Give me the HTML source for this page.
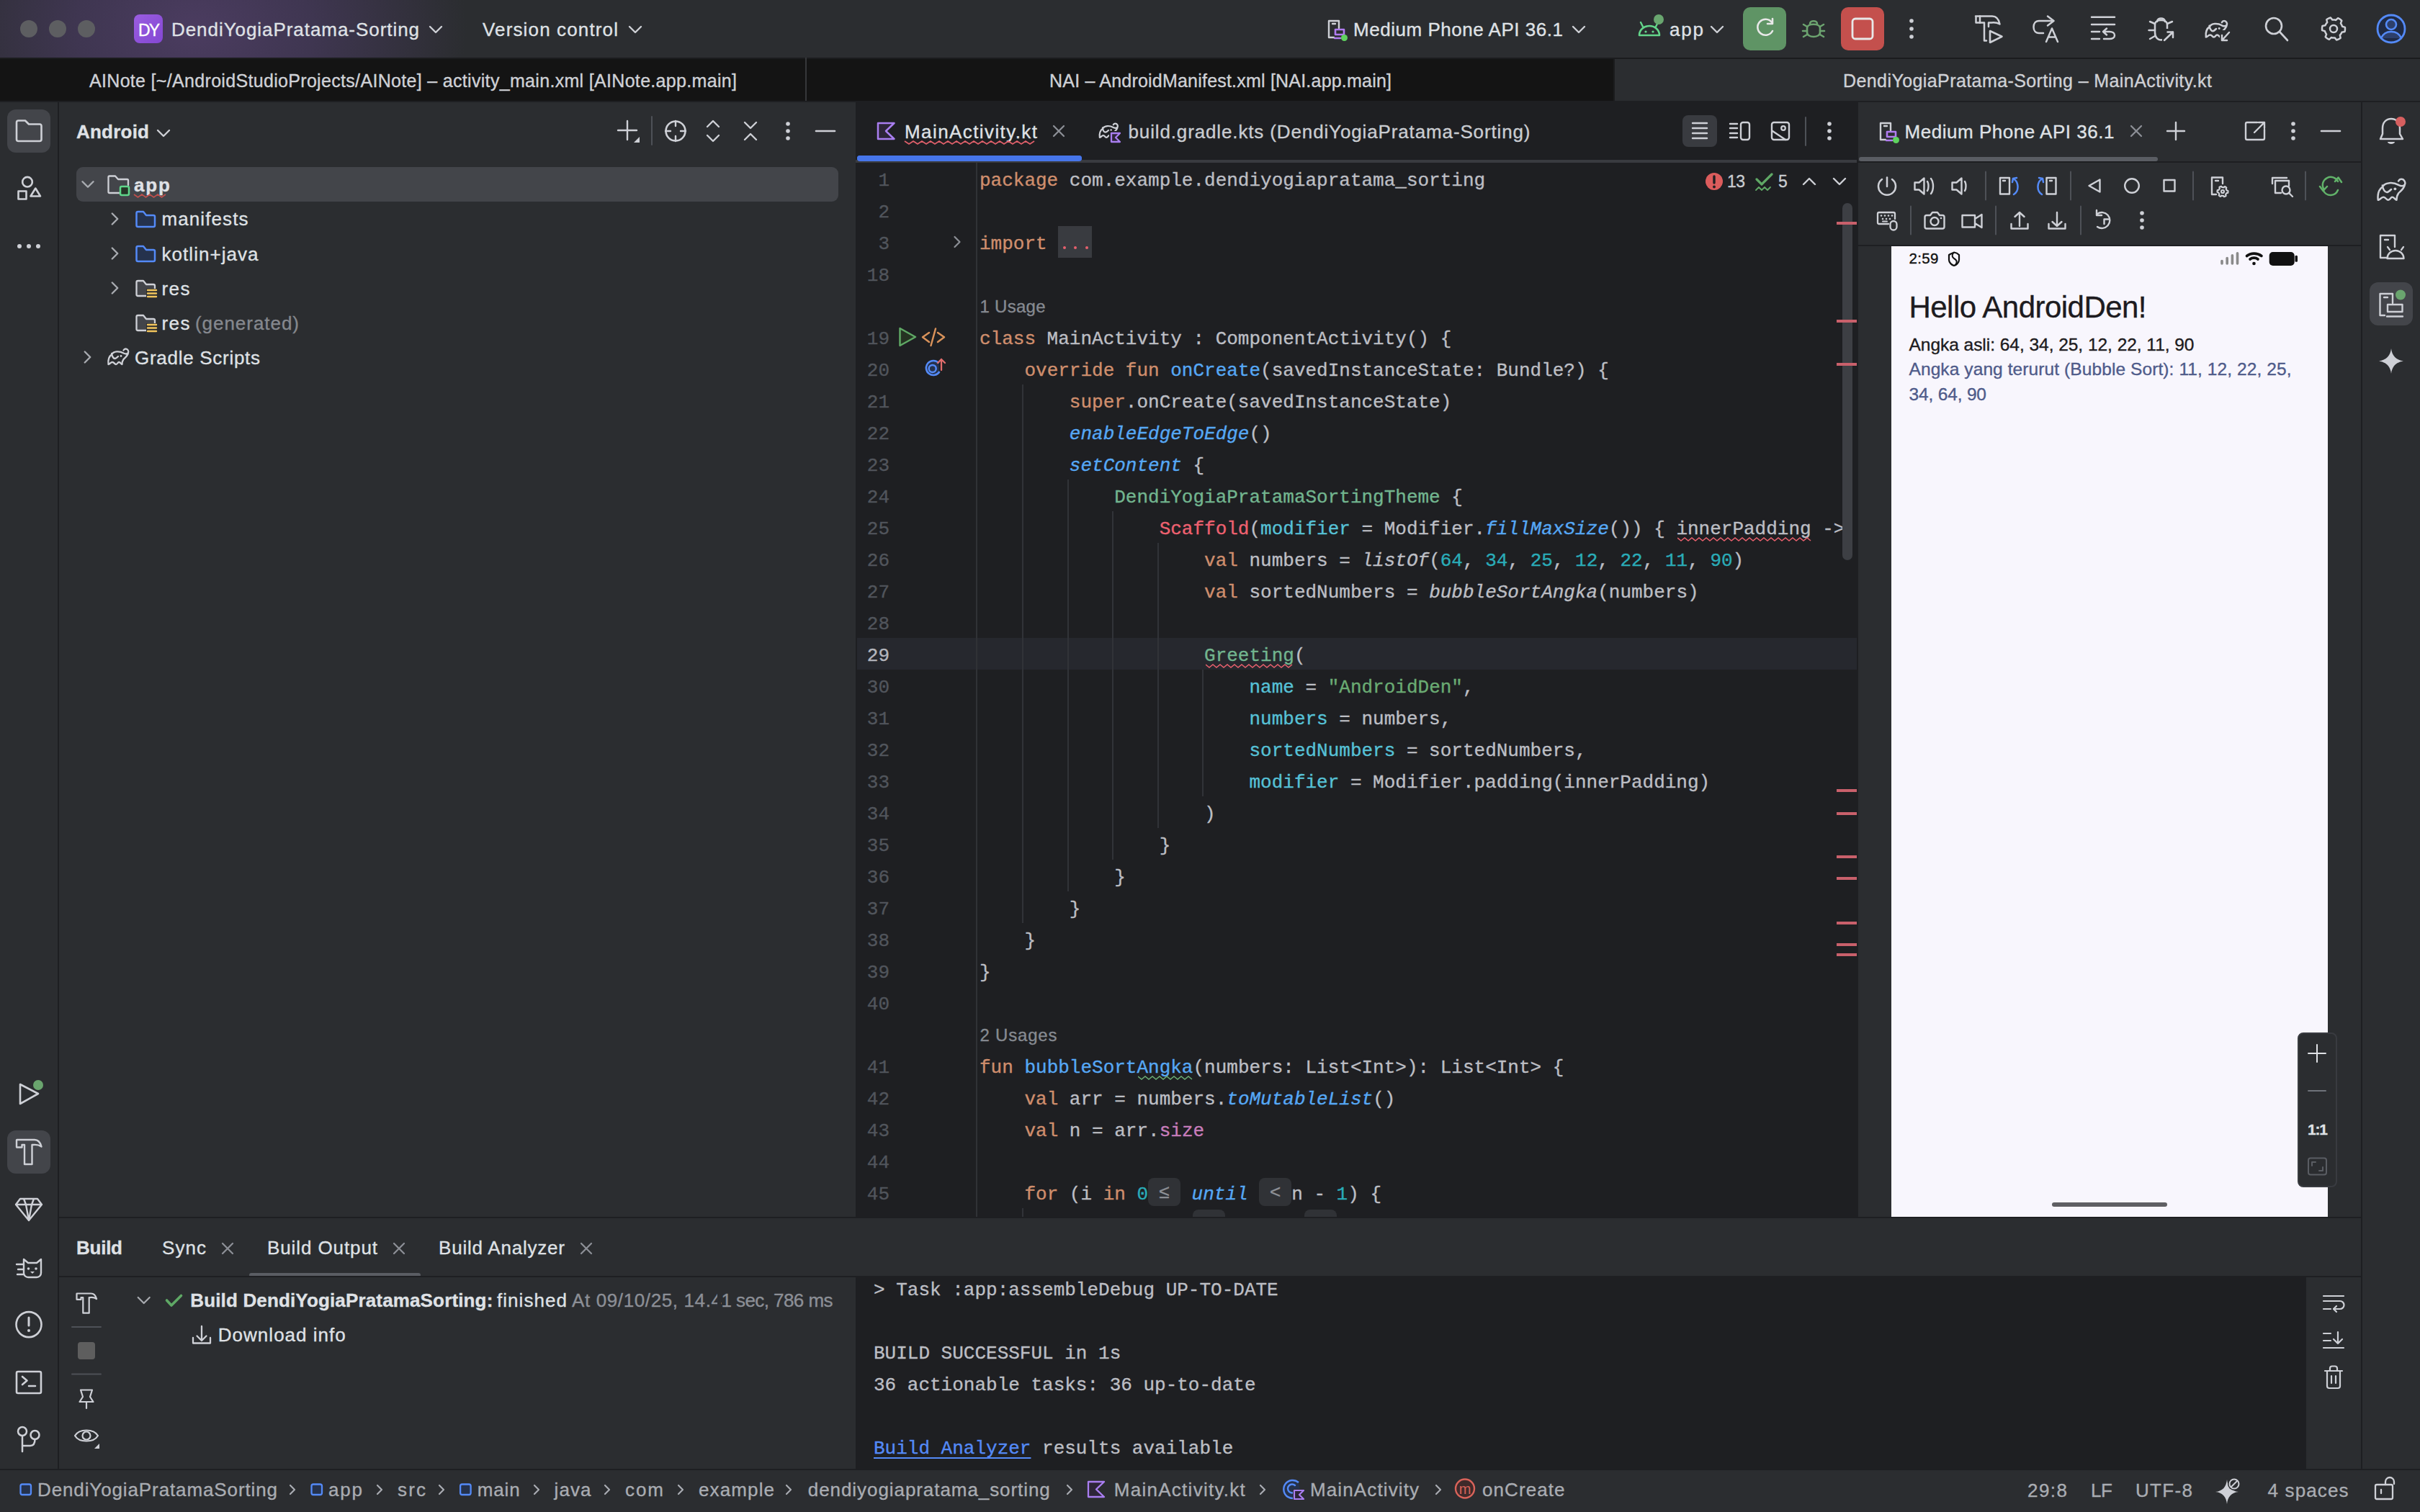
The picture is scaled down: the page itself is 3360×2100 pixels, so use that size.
<!DOCTYPE html><html><head><meta charset='utf-8'><style>
html,body{margin:0;padding:0;width:3360px;height:2100px;overflow:hidden;background:#2b2d30}
div{-webkit-text-stroke:0.35px currentColor}
</style></head><body><div style='position:absolute;left:0;top:0;width:3360px;height:80px;background:radial-gradient(ellipse 430px 300px at 270px 40px,#4b3c60 0%,#3f3651 38%,#2b2d30 88%)'></div>
<div style='position:absolute;left:28px;top:28px;width:24px;height:24px;background:#5d5e61;border-radius:12px;'></div>
<div style='position:absolute;left:68px;top:28px;width:24px;height:24px;background:#5d5e61;border-radius:12px;'></div>
<div style='position:absolute;left:108px;top:28px;width:24px;height:24px;background:#5d5e61;border-radius:12px;'></div>
<div style='position:absolute;left:186px;top:20px;width:40px;height:40px;background:linear-gradient(135deg,#9a5de0,#8447d3);border-radius:8px;'></div>
<div style="position:absolute;left:192.0px;top:42.0px;line-height:0;white-space:pre;font-family:'Liberation Sans', sans-serif;font-size:23px;font-weight:400;font-style:normal;color:#ffffff;letter-spacing:-1.953px;">DY</div>
<div style="position:absolute;left:238.0px;top:41.0px;line-height:0;white-space:pre;font-family:'Liberation Sans', sans-serif;font-size:26px;font-weight:400;font-style:normal;color:#dfe1e5;letter-spacing:0.944px;">DendiYogiaPratama-Sorting</div>
<div style="position:absolute;left:670.0px;top:41.0px;line-height:0;white-space:pre;font-family:'Liberation Sans', sans-serif;font-size:26px;font-weight:400;font-style:normal;color:#dfe1e5;letter-spacing:1.144px;">Version control</div>
<div style="position:absolute;left:1879.0px;top:41.0px;line-height:0;white-space:pre;font-family:'Liberation Sans', sans-serif;font-size:26px;font-weight:400;font-style:normal;color:#dfe1e5;letter-spacing:0.530px;">Medium Phone API 36.1</div>
<div style="position:absolute;left:2318.0px;top:41.0px;line-height:0;white-space:pre;font-family:'Liberation Sans', sans-serif;font-size:26px;font-weight:400;font-style:normal;color:#dfe1e5;letter-spacing:1.805px;">app</div>
<div style='position:absolute;left:2420px;top:10px;width:60px;height:60px;background:#5f9465;border-radius:10px;'></div>
<div style='position:absolute;left:2556px;top:10px;width:60px;height:60px;background:#c4504d;border-radius:10px;'></div>
<div style='position:absolute;left:0px;top:80px;width:3360px;height:60px;background:#141414;border-radius:0px;'></div>
<div style='position:absolute;left:0px;top:80px;width:3360px;height:2px;background:#1b1c1e;border-radius:0px;'></div>
<div style='position:absolute;left:1118px;top:80px;width:2px;height:60px;background:#36373a;border-radius:0px;'></div>
<div style='position:absolute;left:2240px;top:82px;width:1120px;height:58px;background:#2b2d30;border-radius:0px;'></div>
<div style='position:absolute;left:2240px;top:82px;width:2px;height:58px;background:#1b1c1e;border-radius:0px;'></div>
<div style="position:absolute;left:124.0px;top:112.3px;line-height:0;white-space:pre;font-family:'Liberation Sans', sans-serif;font-size:25px;font-weight:400;font-style:normal;color:#cfd1d6;letter-spacing:0.319px;">AINote [~/AndroidStudioProjects/AINote] – activity_main.xml [AINote.app.main]</div>
<div style="position:absolute;left:1457.0px;top:112.3px;line-height:0;white-space:pre;font-family:'Liberation Sans', sans-serif;font-size:25px;font-weight:400;font-style:normal;color:#cfd1d6;letter-spacing:0.208px;">NAI – AndroidManifest.xml [NAI.app.main]</div>
<div style="position:absolute;left:2559.0px;top:112.3px;line-height:0;white-space:pre;font-family:'Liberation Sans', sans-serif;font-size:25px;font-weight:400;font-style:normal;color:#cfd1d6;letter-spacing:0.412px;">DendiYogiaPratama-Sorting – MainActivity.kt</div>
<div style='position:absolute;left:0px;top:140px;width:3360px;height:2px;background:#1e1f22;border-radius:0px;'></div>
<div style='position:absolute;left:0px;top:142px;width:80px;height:1898px;background:#2b2d30;border-radius:0px;'></div>
<div style='position:absolute;left:80px;top:142px;width:2px;height:1898px;background:#1e1f22;border-radius:0px;'></div>
<div style='position:absolute;left:10px;top:152px;width:60px;height:60px;background:#43454a;border-radius:12px;'></div>
<div style='position:absolute;left:10px;top:1570px;width:60px;height:60px;background:#43454a;border-radius:12px;'></div>
<div style='position:absolute;left:82px;top:142px;width:1106px;height:1548px;background:#2b2d30;border-radius:0px;'></div>
<div style="position:absolute;left:106.0px;top:183.0px;line-height:0;white-space:pre;font-family:'Liberation Sans', sans-serif;font-size:26px;font-weight:700;font-style:normal;color:#dfe1e5;letter-spacing:0.224px;">Android</div>
<div style='position:absolute;left:106px;top:232px;width:1058px;height:48px;background:#43454a;border-radius:9px;'></div>
<div style="position:absolute;left:186.0px;top:256.6px;line-height:0;white-space:pre;font-family:'Liberation Sans', sans-serif;font-size:26px;font-weight:700;font-style:normal;color:#dfe1e5;letter-spacing:1.883px;">app</div>
<div style="position:absolute;left:224.5px;top:304.4px;line-height:0;white-space:pre;font-family:'Liberation Sans', sans-serif;font-size:26px;font-weight:400;font-style:normal;color:#dfe1e5;letter-spacing:1.092px;">manifests</div>
<div style="position:absolute;left:224.5px;top:352.9px;line-height:0;white-space:pre;font-family:'Liberation Sans', sans-serif;font-size:26px;font-weight:400;font-style:normal;color:#dfe1e5;letter-spacing:1.042px;">kotlin+java</div>
<div style="position:absolute;left:224.5px;top:401.0px;line-height:0;white-space:pre;font-family:'Liberation Sans', sans-serif;font-size:26px;font-weight:400;font-style:normal;color:#dfe1e5;letter-spacing:1.438px;">res</div>
<div style="position:absolute;left:224.5px;top:448.8px;line-height:0;white-space:pre;font-family:'Liberation Sans', sans-serif;font-size:26px;font-weight:400;font-style:normal;color:#dfe1e5;letter-spacing:1.438px;">res</div>
<div style="position:absolute;left:271.0px;top:448.8px;line-height:0;white-space:pre;font-family:'Liberation Sans', sans-serif;font-size:26px;font-weight:400;font-style:normal;color:#85888e;letter-spacing:0.958px;">(generated)</div>
<div style="position:absolute;left:187.0px;top:496.6px;line-height:0;white-space:pre;font-family:'Liberation Sans', sans-serif;font-size:26px;font-weight:400;font-style:normal;color:#dfe1e5;letter-spacing:0.713px;">Gradle Scripts</div>
<div style='position:absolute;left:1188px;top:142px;width:1392px;height:1548px;background:#1e1f22;border-radius:0px;'></div>
<div style='position:absolute;left:1190px;top:216px;width:312px;height:8px;background:#3b72e8;border-radius:4px;'></div>
<div style='position:absolute;left:1188px;top:222px;width:1390px;height:4px;background:#393b40;border-radius:0px;'></div>
<div style='position:absolute;left:1190px;top:216px;width:312px;height:8px;background:#4675ea;border-radius:4px;'></div>
<div style="position:absolute;left:1256.0px;top:183.0px;line-height:0;white-space:pre;font-family:'Liberation Sans', sans-serif;font-size:26px;font-weight:400;font-style:normal;color:#dfe1e5;letter-spacing:1.413px;">MainActivity.kt</div>
<div style="position:absolute;left:1566.5px;top:183.0px;line-height:0;white-space:pre;font-family:'Liberation Sans', sans-serif;font-size:26px;font-weight:400;font-style:normal;color:#c9ccd1;letter-spacing:0.866px;">build.gradle.kts (DendiYogiaPratama-Sorting)</div>
<div style='position:absolute;left:2336px;top:160px;width:48px;height:44px;background:#393b40;border-radius:8px;'></div>
<div style='position:absolute;left:1190px;top:886px;width:1388px;height:44px;background:#26282e;border-radius:0px;'></div>
<div style='position:absolute;left:1354.5px;top:226px;width:2px;height:1464px;background:#303236;border-radius:0px;'></div>
<div style='position:absolute;left:1419.4px;top:534px;width:2px;height:748px;background:#313338;border-radius:0px;'></div>
<div style='position:absolute;left:1481.8px;top:666px;width:2px;height:572px;background:#313338;border-radius:0px;'></div>
<div style='position:absolute;left:1544.2px;top:710px;width:2px;height:484px;background:#313338;border-radius:0px;'></div>
<div style='position:absolute;left:1606.6px;top:754px;width:2px;height:396px;background:#313338;border-radius:0px;'></div>
<div style='position:absolute;left:1669.0px;top:930px;width:2px;height:176px;background:#313338;border-radius:0px;'></div>
<div style='position:absolute;left:1419.4px;top:1678px;width:2px;height:44px;background:#313338;border-radius:0px;'></div>
<div style='position:absolute;left:1469.2px;top:314px;width:47px;height:44px;background:#393b40;border-radius:0px;'></div>
<div style='position:absolute;left:1475.7px;top:342px;width:4px;height:4px;background:#e5606d;border-radius:2px;'></div>
<div style='position:absolute;left:1491.3px;top:342px;width:4px;height:4px;background:#e5606d;border-radius:2px;'></div>
<div style='position:absolute;left:1506.9px;top:342px;width:4px;height:4px;background:#e5606d;border-radius:2px;'></div>
<div style='position:absolute;left:1594.0px;top:1636px;width:45px;height:39px;background:#303236;border-radius:8px;'></div>
<div style="position:absolute;left:1594.0px;width:45px;text-align:center;top:1636px;height:39px;line-height:39px;font-family:'Liberation Sans',sans-serif;font-size:26px;color:#8e9197">≤</div>
<div style='position:absolute;left:1748.2px;top:1636px;width:45px;height:39px;background:#303236;border-radius:8px;'></div>
<div style="position:absolute;left:1748.2px;width:45px;text-align:center;top:1636px;height:39px;line-height:39px;font-family:'Liberation Sans',sans-serif;font-size:26px;color:#8e9197">&lt;</div>
<div style="position:absolute;left:1360px;top:1637.2px;height:44px;line-height:44px;white-space:pre;font-family:'Liberation Mono',monospace;font-size:26px;color:#bcbec4"><span style='color:#bcbec4'>    </span><span style='color:#cf8e6d'>for</span><span style='color:#bcbec4'> (i </span><span style='color:#cf8e6d'>in</span><span style='color:#bcbec4'> </span><span style='color:#2aacb8'>0</span></div>
<div style="position:absolute;left:1639.0px;top:1637.2px;height:44px;line-height:44px;white-space:pre;font-family:'Liberation Mono',monospace;font-size:26px;color:#bcbec4"><span style='color:#bcbec4'> </span><span style='color:#56a8f5;font-style:italic'>until</span><span style='color:#bcbec4'> </span></div>
<div style="position:absolute;left:1793.2px;top:1637.2px;height:44px;line-height:44px;white-space:pre;font-family:'Liberation Mono',monospace;font-size:26px;color:#bcbec4"><span style='color:#bcbec4'>n - </span><span style='color:#2aacb8'>1</span><span style='color:#bcbec4'>) {</span></div>
<div style='position:absolute;left:1656.4px;top:1680px;width:45px;height:39px;background:#303236;border-radius:8px;'></div>
<div style="position:absolute;left:1656.4px;width:45px;text-align:center;top:1680px;height:39px;line-height:39px;font-family:'Liberation Sans',sans-serif;font-size:26px;color:#8e9197">≤</div>
<div style='position:absolute;left:1810.6000000000001px;top:1680px;width:45px;height:39px;background:#303236;border-radius:8px;'></div>
<div style="position:absolute;left:1810.6000000000001px;width:45px;text-align:center;top:1680px;height:39px;line-height:39px;font-family:'Liberation Sans',sans-serif;font-size:26px;color:#8e9197">&lt;</div>
<div style="position:absolute;left:1360px;top:1681.2px;height:44px;line-height:44px;white-space:pre;font-family:'Liberation Mono',monospace;font-size:26px;color:#bcbec4"><span style='color:#bcbec4'>        </span><span style='color:#cf8e6d'>for</span><span style='color:#bcbec4'> (j </span><span style='color:#cf8e6d'>in</span><span style='color:#bcbec4'> </span><span style='color:#2aacb8'>0</span></div>
<div style="position:absolute;left:1701.4px;top:1681.2px;height:44px;line-height:44px;white-space:pre;font-family:'Liberation Mono',monospace;font-size:26px;color:#bcbec4"><span style='color:#bcbec4'> </span><span style='color:#56a8f5;font-style:italic'>until</span><span style='color:#bcbec4'> </span></div>
<div style="position:absolute;left:1855.6000000000001px;top:1681.2px;height:44px;line-height:44px;white-space:pre;font-family:'Liberation Mono',monospace;font-size:26px;color:#bcbec4"><span style='color:#bcbec4'>n - i - </span><span style='color:#2aacb8'>1</span><span style='color:#bcbec4'>) {</span></div>
<div style="position:absolute;left:1360px;top:229.2px;height:44px;line-height:44px;white-space:pre;font-family:'Liberation Mono',monospace;font-size:26px;color:#bcbec4"><span style='color:#cf8e6d'>package</span><span style='color:#bcbec4'> com.example.dendiyogiapratama_sorting</span></div>
<div style="position:absolute;left:1360px;top:317.2px;height:44px;line-height:44px;white-space:pre;font-family:'Liberation Mono',monospace;font-size:26px;color:#bcbec4"><span style='color:#cf8e6d'>import</span></div>
<div style="position:absolute;left:1360px;top:449.2px;height:44px;line-height:44px;white-space:pre;font-family:'Liberation Mono',monospace;font-size:26px;color:#bcbec4"><span style='color:#cf8e6d'>class</span><span style='color:#bcbec4'> MainActivity : ComponentActivity() {</span></div>
<div style="position:absolute;left:1360px;top:493.2px;height:44px;line-height:44px;white-space:pre;font-family:'Liberation Mono',monospace;font-size:26px;color:#bcbec4"><span style='color:#bcbec4'>    </span><span style='color:#cf8e6d'>override fun </span><span style='color:#56a8f5'>onCreate</span><span style='color:#bcbec4'>(savedInstanceState: Bundle?) {</span></div>
<div style="position:absolute;left:1360px;top:537.2px;height:44px;line-height:44px;white-space:pre;font-family:'Liberation Mono',monospace;font-size:26px;color:#bcbec4"><span style='color:#bcbec4'>        </span><span style='color:#cf8e6d'>super</span><span style='color:#bcbec4'>.onCreate(savedInstanceState)</span></div>
<div style="position:absolute;left:1360px;top:581.2px;height:44px;line-height:44px;white-space:pre;font-family:'Liberation Mono',monospace;font-size:26px;color:#bcbec4"><span style='color:#bcbec4'>        </span><span style='color:#56a8f5;font-style:italic'>enableEdgeToEdge</span><span style='color:#bcbec4'>()</span></div>
<div style="position:absolute;left:1360px;top:625.2px;height:44px;line-height:44px;white-space:pre;font-family:'Liberation Mono',monospace;font-size:26px;color:#bcbec4"><span style='color:#bcbec4'>        </span><span style='color:#56a8f5;font-style:italic'>setContent</span><span style='color:#bcbec4'> {</span></div>
<div style="position:absolute;left:1360px;top:669.2px;height:44px;line-height:44px;white-space:pre;font-family:'Liberation Mono',monospace;font-size:26px;color:#bcbec4"><span style='color:#bcbec4'>            </span><span style='color:#72b58f'>DendiYogiaPratamaSortingTheme</span><span style='color:#bcbec4'> {</span></div>
<div style="position:absolute;left:1360px;top:713.2px;height:44px;line-height:44px;white-space:pre;font-family:'Liberation Mono',monospace;font-size:26px;color:#bcbec4"><span style='color:#bcbec4'>                </span><span style='color:#ee6170'>Scaffold</span><span style='color:#bcbec4'>(</span><span style='color:#56c1d6'>modifier</span><span style='color:#bcbec4'> = Modifier.</span><span style='color:#56a8f5;font-style:italic'>fillMaxSize</span><span style='color:#bcbec4'>()) { innerPadding -&gt;</span></div>
<div style="position:absolute;left:1360px;top:757.2px;height:44px;line-height:44px;white-space:pre;font-family:'Liberation Mono',monospace;font-size:26px;color:#bcbec4"><span style='color:#bcbec4'>                    </span><span style='color:#cf8e6d'>val</span><span style='color:#bcbec4'> numbers = </span><span style='color:#bcbec4;font-style:italic'>listOf</span><span style='color:#bcbec4'>(</span><span style='color:#2aacb8'>64</span><span style='color:#bcbec4'>, </span><span style='color:#2aacb8'>34</span><span style='color:#bcbec4'>, </span><span style='color:#2aacb8'>25</span><span style='color:#bcbec4'>, </span><span style='color:#2aacb8'>12</span><span style='color:#bcbec4'>, </span><span style='color:#2aacb8'>22</span><span style='color:#bcbec4'>, </span><span style='color:#2aacb8'>11</span><span style='color:#bcbec4'>, </span><span style='color:#2aacb8'>90</span><span style='color:#bcbec4'>)</span></div>
<div style="position:absolute;left:1360px;top:801.2px;height:44px;line-height:44px;white-space:pre;font-family:'Liberation Mono',monospace;font-size:26px;color:#bcbec4"><span style='color:#bcbec4'>                    </span><span style='color:#cf8e6d'>val</span><span style='color:#bcbec4'> sortedNumbers = </span><span style='color:#bcbec4;font-style:italic'>bubbleSortAngka</span><span style='color:#bcbec4'>(numbers)</span></div>
<div style="position:absolute;left:1360px;top:889.2px;height:44px;line-height:44px;white-space:pre;font-family:'Liberation Mono',monospace;font-size:26px;color:#bcbec4"><span style='color:#bcbec4'>                    </span><span style='color:#72b58f'>Greeting</span><span style='color:#bcbec4'>(</span></div>
<div style="position:absolute;left:1360px;top:933.2px;height:44px;line-height:44px;white-space:pre;font-family:'Liberation Mono',monospace;font-size:26px;color:#bcbec4"><span style='color:#bcbec4'>                        </span><span style='color:#56c1d6'>name</span><span style='color:#bcbec4'> = </span><span style='color:#6aab73'>&quot;AndroidDen&quot;</span><span style='color:#bcbec4'>,</span></div>
<div style="position:absolute;left:1360px;top:977.2px;height:44px;line-height:44px;white-space:pre;font-family:'Liberation Mono',monospace;font-size:26px;color:#bcbec4"><span style='color:#bcbec4'>                        </span><span style='color:#56c1d6'>numbers</span><span style='color:#bcbec4'> = numbers,</span></div>
<div style="position:absolute;left:1360px;top:1021.2px;height:44px;line-height:44px;white-space:pre;font-family:'Liberation Mono',monospace;font-size:26px;color:#bcbec4"><span style='color:#bcbec4'>                        </span><span style='color:#56c1d6'>sortedNumbers</span><span style='color:#bcbec4'> = sortedNumbers,</span></div>
<div style="position:absolute;left:1360px;top:1065.2px;height:44px;line-height:44px;white-space:pre;font-family:'Liberation Mono',monospace;font-size:26px;color:#bcbec4"><span style='color:#bcbec4'>                        </span><span style='color:#56c1d6'>modifier</span><span style='color:#bcbec4'> = Modifier.padding(innerPadding)</span></div>
<div style="position:absolute;left:1360px;top:1109.2px;height:44px;line-height:44px;white-space:pre;font-family:'Liberation Mono',monospace;font-size:26px;color:#bcbec4"><span style='color:#bcbec4'>                    )</span></div>
<div style="position:absolute;left:1360px;top:1153.2px;height:44px;line-height:44px;white-space:pre;font-family:'Liberation Mono',monospace;font-size:26px;color:#bcbec4"><span style='color:#bcbec4'>                }</span></div>
<div style="position:absolute;left:1360px;top:1197.2px;height:44px;line-height:44px;white-space:pre;font-family:'Liberation Mono',monospace;font-size:26px;color:#bcbec4"><span style='color:#bcbec4'>            }</span></div>
<div style="position:absolute;left:1360px;top:1241.2px;height:44px;line-height:44px;white-space:pre;font-family:'Liberation Mono',monospace;font-size:26px;color:#bcbec4"><span style='color:#bcbec4'>        }</span></div>
<div style="position:absolute;left:1360px;top:1285.2px;height:44px;line-height:44px;white-space:pre;font-family:'Liberation Mono',monospace;font-size:26px;color:#bcbec4"><span style='color:#bcbec4'>    }</span></div>
<div style="position:absolute;left:1360px;top:1329.2px;height:44px;line-height:44px;white-space:pre;font-family:'Liberation Mono',monospace;font-size:26px;color:#bcbec4"><span style='color:#bcbec4'>}</span></div>
<div style="position:absolute;left:1360px;top:1461.2px;height:44px;line-height:44px;white-space:pre;font-family:'Liberation Mono',monospace;font-size:26px;color:#bcbec4"><span style='color:#cf8e6d'>fun </span><span style='color:#56a8f5'>bubbleSortAngka</span><span style='color:#bcbec4'>(numbers: List&lt;Int&gt;): List&lt;Int&gt; {</span></div>
<div style="position:absolute;left:1360px;top:1505.2px;height:44px;line-height:44px;white-space:pre;font-family:'Liberation Mono',monospace;font-size:26px;color:#bcbec4"><span style='color:#bcbec4'>    </span><span style='color:#cf8e6d'>val</span><span style='color:#bcbec4'> arr = numbers.</span><span style='color:#56a8f5;font-style:italic'>toMutableList</span><span style='color:#bcbec4'>()</span></div>
<div style="position:absolute;left:1360px;top:1549.2px;height:44px;line-height:44px;white-space:pre;font-family:'Liberation Mono',monospace;font-size:26px;color:#bcbec4"><span style='color:#bcbec4'>    </span><span style='color:#cf8e6d'>val</span><span style='color:#bcbec4'> n = arr.</span><span style='color:#c77dbb'>size</span></div>
<div style="position:absolute;left:1360.5px;top:426.3px;line-height:0;white-space:pre;font-family:'Liberation Sans', sans-serif;font-size:24px;font-weight:400;font-style:normal;color:#868a91;letter-spacing:0.268px;">1 Usage</div>
<div style="position:absolute;left:1360.5px;top:1438.3px;line-height:0;white-space:pre;font-family:'Liberation Sans', sans-serif;font-size:24px;font-weight:400;font-style:normal;color:#868a91;letter-spacing:0.801px;">2 Usages</div>
<div style="position:absolute;left:1140px;width:95px;text-align:right;top:229.2px;height:44px;line-height:44px;white-space:pre;font-family:'Liberation Mono',monospace;font-size:26px;color:#51555c">1</div>
<div style="position:absolute;left:1140px;width:95px;text-align:right;top:273.2px;height:44px;line-height:44px;white-space:pre;font-family:'Liberation Mono',monospace;font-size:26px;color:#51555c">2</div>
<div style="position:absolute;left:1140px;width:95px;text-align:right;top:317.2px;height:44px;line-height:44px;white-space:pre;font-family:'Liberation Mono',monospace;font-size:26px;color:#51555c">3</div>
<div style="position:absolute;left:1140px;width:95px;text-align:right;top:361.2px;height:44px;line-height:44px;white-space:pre;font-family:'Liberation Mono',monospace;font-size:26px;color:#51555c">18</div>
<div style="position:absolute;left:1140px;width:95px;text-align:right;top:449.2px;height:44px;line-height:44px;white-space:pre;font-family:'Liberation Mono',monospace;font-size:26px;color:#51555c">19</div>
<div style="position:absolute;left:1140px;width:95px;text-align:right;top:493.2px;height:44px;line-height:44px;white-space:pre;font-family:'Liberation Mono',monospace;font-size:26px;color:#51555c">20</div>
<div style="position:absolute;left:1140px;width:95px;text-align:right;top:537.2px;height:44px;line-height:44px;white-space:pre;font-family:'Liberation Mono',monospace;font-size:26px;color:#51555c">21</div>
<div style="position:absolute;left:1140px;width:95px;text-align:right;top:581.2px;height:44px;line-height:44px;white-space:pre;font-family:'Liberation Mono',monospace;font-size:26px;color:#51555c">22</div>
<div style="position:absolute;left:1140px;width:95px;text-align:right;top:625.2px;height:44px;line-height:44px;white-space:pre;font-family:'Liberation Mono',monospace;font-size:26px;color:#51555c">23</div>
<div style="position:absolute;left:1140px;width:95px;text-align:right;top:669.2px;height:44px;line-height:44px;white-space:pre;font-family:'Liberation Mono',monospace;font-size:26px;color:#51555c">24</div>
<div style="position:absolute;left:1140px;width:95px;text-align:right;top:713.2px;height:44px;line-height:44px;white-space:pre;font-family:'Liberation Mono',monospace;font-size:26px;color:#51555c">25</div>
<div style="position:absolute;left:1140px;width:95px;text-align:right;top:757.2px;height:44px;line-height:44px;white-space:pre;font-family:'Liberation Mono',monospace;font-size:26px;color:#51555c">26</div>
<div style="position:absolute;left:1140px;width:95px;text-align:right;top:801.2px;height:44px;line-height:44px;white-space:pre;font-family:'Liberation Mono',monospace;font-size:26px;color:#51555c">27</div>
<div style="position:absolute;left:1140px;width:95px;text-align:right;top:845.2px;height:44px;line-height:44px;white-space:pre;font-family:'Liberation Mono',monospace;font-size:26px;color:#51555c">28</div>
<div style="position:absolute;left:1140px;width:95px;text-align:right;top:889.2px;height:44px;line-height:44px;white-space:pre;font-family:'Liberation Mono',monospace;font-size:26px;color:#b4b6bd">29</div>
<div style="position:absolute;left:1140px;width:95px;text-align:right;top:933.2px;height:44px;line-height:44px;white-space:pre;font-family:'Liberation Mono',monospace;font-size:26px;color:#51555c">30</div>
<div style="position:absolute;left:1140px;width:95px;text-align:right;top:977.2px;height:44px;line-height:44px;white-space:pre;font-family:'Liberation Mono',monospace;font-size:26px;color:#51555c">31</div>
<div style="position:absolute;left:1140px;width:95px;text-align:right;top:1021.2px;height:44px;line-height:44px;white-space:pre;font-family:'Liberation Mono',monospace;font-size:26px;color:#51555c">32</div>
<div style="position:absolute;left:1140px;width:95px;text-align:right;top:1065.2px;height:44px;line-height:44px;white-space:pre;font-family:'Liberation Mono',monospace;font-size:26px;color:#51555c">33</div>
<div style="position:absolute;left:1140px;width:95px;text-align:right;top:1109.2px;height:44px;line-height:44px;white-space:pre;font-family:'Liberation Mono',monospace;font-size:26px;color:#51555c">34</div>
<div style="position:absolute;left:1140px;width:95px;text-align:right;top:1153.2px;height:44px;line-height:44px;white-space:pre;font-family:'Liberation Mono',monospace;font-size:26px;color:#51555c">35</div>
<div style="position:absolute;left:1140px;width:95px;text-align:right;top:1197.2px;height:44px;line-height:44px;white-space:pre;font-family:'Liberation Mono',monospace;font-size:26px;color:#51555c">36</div>
<div style="position:absolute;left:1140px;width:95px;text-align:right;top:1241.2px;height:44px;line-height:44px;white-space:pre;font-family:'Liberation Mono',monospace;font-size:26px;color:#51555c">37</div>
<div style="position:absolute;left:1140px;width:95px;text-align:right;top:1285.2px;height:44px;line-height:44px;white-space:pre;font-family:'Liberation Mono',monospace;font-size:26px;color:#51555c">38</div>
<div style="position:absolute;left:1140px;width:95px;text-align:right;top:1329.2px;height:44px;line-height:44px;white-space:pre;font-family:'Liberation Mono',monospace;font-size:26px;color:#51555c">39</div>
<div style="position:absolute;left:1140px;width:95px;text-align:right;top:1373.2px;height:44px;line-height:44px;white-space:pre;font-family:'Liberation Mono',monospace;font-size:26px;color:#51555c">40</div>
<div style="position:absolute;left:1140px;width:95px;text-align:right;top:1461.2px;height:44px;line-height:44px;white-space:pre;font-family:'Liberation Mono',monospace;font-size:26px;color:#51555c">41</div>
<div style="position:absolute;left:1140px;width:95px;text-align:right;top:1505.2px;height:44px;line-height:44px;white-space:pre;font-family:'Liberation Mono',monospace;font-size:26px;color:#51555c">42</div>
<div style="position:absolute;left:1140px;width:95px;text-align:right;top:1549.2px;height:44px;line-height:44px;white-space:pre;font-family:'Liberation Mono',monospace;font-size:26px;color:#51555c">43</div>
<div style="position:absolute;left:1140px;width:95px;text-align:right;top:1593.2px;height:44px;line-height:44px;white-space:pre;font-family:'Liberation Mono',monospace;font-size:26px;color:#51555c">44</div>
<div style="position:absolute;left:1140px;width:95px;text-align:right;top:1637.2px;height:44px;line-height:44px;white-space:pre;font-family:'Liberation Mono',monospace;font-size:26px;color:#51555c">45</div>
<div style="position:absolute;left:1140px;width:95px;text-align:right;top:1681.2px;height:44px;line-height:44px;white-space:pre;font-family:'Liberation Mono',monospace;font-size:26px;color:#51555c">46</div>
<svg style='position:absolute;left:2328.7px;top:746px' width='193.19999999999982' height='6' fill='none' stroke='#e5606d' stroke-width='1.6'><polyline points='0.0,0 5.0,4 10.0,0 15.0,4 20.0,0 25.0,4 30.0,0 35.0,4 40.0,0 45.0,4 50.0,0 55.0,4 60.0,0 65.0,4 70.0,0 75.0,4 80.0,0 85.0,4 90.0,0 95.0,4 100.0,0 105.0,4 110.0,0 115.0,4 120.0,0 125.0,4 130.0,0 135.0,4 140.0,0 145.0,4 150.0,0 155.0,4 160.0,0 165.0,4 170.0,0 175.0,4 180.0,0 185.0,4' transform='translate(0,1)'/></svg>
<svg style='position:absolute;left:1673.5px;top:922px' width='130.79999999999995' height='6' fill='none' stroke='#e5606d' stroke-width='1.6'><polyline points='0.0,0 5.0,4 10.0,0 15.0,4 20.0,0 25.0,4 30.0,0 35.0,4 40.0,0 45.0,4 50.0,0 55.0,4 60.0,0 65.0,4 70.0,0 75.0,4 80.0,0 85.0,4 90.0,0 95.0,4 100.0,0 105.0,4 110.0,0 115.0,4 120.0,0' transform='translate(0,1)'/></svg>
<svg style='position:absolute;left:1579.9px;top:1494px' width='84.0' height='6' fill='none' stroke='#6aab73' stroke-width='1.6'><polyline points='0.0,0 5.0,4 10.0,0 15.0,4 20.0,0 25.0,4 30.0,0 35.0,4 40.0,0 45.0,4 50.0,0 55.0,4 60.0,0 65.0,4 70.0,0 75.0,4' transform='translate(0,1)'/></svg>
<div style='position:absolute;left:2558px;top:282px;width:14px;height:496px;background:#3d3f44;border-radius:7px;'></div>
<div style='position:absolute;left:2550px;top:308px;width:28px;height:4px;background:#c9606b;border-radius:0px;'></div>
<div style='position:absolute;left:2550px;top:444px;width:28px;height:4px;background:#c9606b;border-radius:0px;'></div>
<div style='position:absolute;left:2550px;top:504px;width:28px;height:4px;background:#c9606b;border-radius:0px;'></div>
<div style='position:absolute;left:2550px;top:1096px;width:28px;height:4px;background:#c9606b;border-radius:0px;'></div>
<div style='position:absolute;left:2550px;top:1128px;width:28px;height:4px;background:#c9606b;border-radius:0px;'></div>
<div style='position:absolute;left:2550px;top:1188px;width:28px;height:4px;background:#c9606b;border-radius:0px;'></div>
<div style='position:absolute;left:2550px;top:1218px;width:28px;height:4px;background:#c9606b;border-radius:0px;'></div>
<div style='position:absolute;left:2550px;top:1280px;width:28px;height:4px;background:#c9606b;border-radius:0px;'></div>
<div style='position:absolute;left:2550px;top:1310px;width:28px;height:4px;background:#c9606b;border-radius:0px;'></div>
<div style='position:absolute;left:2550px;top:1324px;width:28px;height:4px;background:#c9606b;border-radius:0px;'></div>
<div style="position:absolute;left:2398.0px;top:251.6px;line-height:0;white-space:pre;font-family:'Liberation Sans', sans-serif;font-size:23px;font-weight:400;font-style:normal;color:#c9ccd1;letter-spacing:-0.594px;">13</div>
<div style="position:absolute;left:2469.0px;top:251.6px;line-height:0;white-space:pre;font-family:'Liberation Sans', sans-serif;font-size:23px;font-weight:400;font-style:normal;color:#c9ccd1;">5</div>
<div style='position:absolute;left:2580px;top:142px;width:698px;height:1548px;background:#2b2d30;border-radius:0px;'></div>
<div style="position:absolute;left:2644.5px;top:182.6px;line-height:0;white-space:pre;font-family:'Liberation Sans', sans-serif;font-size:26px;font-weight:400;font-style:normal;color:#dfe1e5;letter-spacing:0.530px;">Medium Phone API 36.1</div>
<div style='position:absolute;left:2580px;top:224px;width:698px;height:2px;background:#1e1f22;border-radius:0px;'></div>
<div style='position:absolute;left:2581px;top:218px;width:415px;height:6px;background:#5a5d63;border-radius:3px;'></div>
<div style='position:absolute;left:2580px;top:340px;width:698px;height:2px;background:#1e1f22;border-radius:0px;'></div>
<div style='position:absolute;left:2626px;top:342px;width:606px;height:1348px;background:#f8f6fd;border-radius:0px;'></div>
<div style='position:absolute;left:3278px;top:142px;width:2px;height:1898px;background:#1e1f22;border-radius:0px;'></div>
<div style='position:absolute;left:3280px;top:142px;width:80px;height:1898px;background:#2b2d30;border-radius:0px;'></div>
<div style='position:absolute;left:3290px;top:392px;width:60px;height:60px;background:#43454a;border-radius:12px;'></div>
<div style='position:absolute;left:82px;top:1690px;width:3196px;height:2px;background:#1e1f22;border-radius:0px;'></div>
<div style='position:absolute;left:82px;top:1692px;width:3196px;height:348px;background:#2b2d30;border-radius:0px;'></div>
<div style="position:absolute;left:106.0px;top:1733.0px;line-height:0;white-space:pre;font-family:'Liberation Sans', sans-serif;font-size:26px;font-weight:700;font-style:normal;color:#dfe1e5;letter-spacing:-0.250px;">Build</div>
<div style="position:absolute;left:225.0px;top:1733.0px;line-height:0;white-space:pre;font-family:'Liberation Sans', sans-serif;font-size:26px;font-weight:400;font-style:normal;color:#dfe1e5;letter-spacing:1.062px;">Sync</div>
<div style="position:absolute;left:371.0px;top:1733.0px;line-height:0;white-space:pre;font-family:'Liberation Sans', sans-serif;font-size:26px;font-weight:400;font-style:normal;color:#dfe1e5;letter-spacing:0.901px;">Build Output</div>
<div style="position:absolute;left:609.0px;top:1733.0px;line-height:0;white-space:pre;font-family:'Liberation Sans', sans-serif;font-size:26px;font-weight:400;font-style:normal;color:#dfe1e5;letter-spacing:0.787px;">Build Analyzer</div>
<div style='position:absolute;left:346px;top:1768px;width:238px;height:6px;background:#5a5d63;border-radius:3px;'></div>
<div style='position:absolute;left:82px;top:1772px;width:3196px;height:2px;background:#1e1f22;border-radius:0px;'></div>
<div style='position:absolute;left:1188px;top:1774px;width:2014px;height:266px;background:#1e1f22;border-radius:0px;'></div>
<div style="position:absolute;left:264.3px;top:1806.0px;line-height:0;white-space:pre;font-family:'Liberation Sans', sans-serif;font-size:26px;font-weight:700;font-style:normal;color:#dfe1e5;letter-spacing:0.148px;">Build DendiYogiaPratamaSorting:</div>
<div style="position:absolute;left:690.0px;top:1806.0px;line-height:0;white-space:pre;font-family:'Liberation Sans', sans-serif;font-size:26px;font-weight:400;font-style:normal;color:#dfe1e5;letter-spacing:1.054px;">finished</div>
<div style="position:absolute;left:794.0px;top:1806.0px;line-height:0;white-space:pre;font-family:'Liberation Sans', sans-serif;font-size:26px;font-weight:400;font-style:normal;color:#8c8f96;letter-spacing:0.622px;">At 09/10/25, 14.4</div>
<div style='position:absolute;left:995.5px;top:1790px;width:5.5px;height:30px;background:#2b2d30;border-radius:0px;'></div>
<div style="position:absolute;left:1001.5px;top:1806.0px;line-height:0;white-space:pre;font-family:'Liberation Sans', sans-serif;font-size:26px;font-weight:400;font-style:normal;color:#8c8f96;letter-spacing:-0.572px;">1 sec, 786 ms</div>
<div style="position:absolute;left:302.8px;top:1853.7px;line-height:0;white-space:pre;font-family:'Liberation Sans', sans-serif;font-size:26px;font-weight:400;font-style:normal;color:#dfe1e5;letter-spacing:1.018px;">Download info</div>
<div style="position:absolute;left:1213px;top:1770.3px;height:44px;line-height:44px;white-space:pre;font-family:'Liberation Mono',monospace;font-size:26px;color:#bcbec4">&gt; Task :app:assembleDebug UP-TO-DATE</div>
<div style="position:absolute;left:1213px;top:1858.3px;height:44px;line-height:44px;white-space:pre;font-family:'Liberation Mono',monospace;font-size:26px;color:#bcbec4">BUILD SUCCESSFUL in 1s</div>
<div style="position:absolute;left:1213px;top:1902.3px;height:44px;line-height:44px;white-space:pre;font-family:'Liberation Mono',monospace;font-size:26px;color:#bcbec4">36 actionable tasks: 36 up-to-date</div>
<div style="position:absolute;left:1213px;top:1990.3px;height:44px;line-height:44px;white-space:pre;font-family:'Liberation Mono',monospace;font-size:26px;color:#bcbec4"><span style='color:#548af7;text-decoration:underline;text-underline-offset:5px;text-decoration-thickness:2px'>Build Analyzer</span> results available</div>
<div style='position:absolute;left:0px;top:2040px;width:3360px;height:2px;background:#1e1f22;border-radius:0px;'></div>
<div style='position:absolute;left:0px;top:2042px;width:3360px;height:58px;background:#2b2d30;border-radius:0px;'></div>
<div style="position:absolute;left:52.0px;top:2068.7px;line-height:0;white-space:pre;font-family:'Liberation Sans', sans-serif;font-size:26px;font-weight:400;font-style:normal;color:#a9acb2;letter-spacing:0.883px;">DendiYogiaPratamaSorting</div>
<div style="position:absolute;left:456.0px;top:2068.7px;line-height:0;white-space:pre;font-family:'Liberation Sans', sans-serif;font-size:26px;font-weight:400;font-style:normal;color:#a9acb2;letter-spacing:1.805px;">app</div>
<div style="position:absolute;left:552.0px;top:2068.7px;line-height:0;white-space:pre;font-family:'Liberation Sans', sans-serif;font-size:26px;font-weight:400;font-style:normal;color:#a9acb2;letter-spacing:2.164px;">src</div>
<div style="position:absolute;left:662.7px;top:2068.7px;line-height:0;white-space:pre;font-family:'Liberation Sans', sans-serif;font-size:26px;font-weight:400;font-style:normal;color:#a9acb2;letter-spacing:0.880px;">main</div>
<div style="position:absolute;left:769.5px;top:2068.7px;line-height:0;white-space:pre;font-family:'Liberation Sans', sans-serif;font-size:26px;font-weight:400;font-style:normal;color:#a9acb2;letter-spacing:1.099px;">java</div>
<div style="position:absolute;left:868.0px;top:2068.7px;line-height:0;white-space:pre;font-family:'Liberation Sans', sans-serif;font-size:26px;font-weight:400;font-style:normal;color:#a9acb2;letter-spacing:1.938px;">com</div>
<div style="position:absolute;left:970.0px;top:2068.7px;line-height:0;white-space:pre;font-family:'Liberation Sans', sans-serif;font-size:26px;font-weight:400;font-style:normal;color:#a9acb2;letter-spacing:1.120px;">example</div>
<div style="position:absolute;left:1121.8px;top:2068.7px;line-height:0;white-space:pre;font-family:'Liberation Sans', sans-serif;font-size:26px;font-weight:400;font-style:normal;color:#a9acb2;letter-spacing:0.931px;">dendiyogiapratama_sorting</div>
<div style="position:absolute;left:1546.8px;top:2068.7px;line-height:0;white-space:pre;font-family:'Liberation Sans', sans-serif;font-size:26px;font-weight:400;font-style:normal;color:#a9acb2;letter-spacing:1.270px;">MainActivity.kt</div>
<div style="position:absolute;left:1819.0px;top:2068.7px;line-height:0;white-space:pre;font-family:'Liberation Sans', sans-serif;font-size:26px;font-weight:400;font-style:normal;color:#a9acb2;letter-spacing:1.118px;">MainActivity</div>
<div style="position:absolute;left:2058.0px;top:2068.7px;line-height:0;white-space:pre;font-family:'Liberation Sans', sans-serif;font-size:26px;font-weight:400;font-style:normal;color:#a9acb2;letter-spacing:1.076px;">onCreate</div>
<div style="position:absolute;left:2815.0px;top:2069.5px;line-height:0;white-space:pre;font-family:'Liberation Sans', sans-serif;font-size:26px;font-weight:400;font-style:normal;color:#a9acb2;letter-spacing:1.464px;">29:8</div>
<div style="position:absolute;left:2903.0px;top:2069.5px;line-height:0;white-space:pre;font-family:'Liberation Sans', sans-serif;font-size:26px;font-weight:400;font-style:normal;color:#a9acb2;letter-spacing:-0.344px;">LF</div>
<div style="position:absolute;left:2965.0px;top:2069.5px;line-height:0;white-space:pre;font-family:'Liberation Sans', sans-serif;font-size:26px;font-weight:400;font-style:normal;color:#a9acb2;letter-spacing:1.332px;">UTF-8</div>
<div style="position:absolute;left:3148.6px;top:2069.5px;line-height:0;white-space:pre;font-family:'Liberation Sans', sans-serif;font-size:26px;font-weight:400;font-style:normal;color:#a9acb2;letter-spacing:1.132px;">4 spaces</div>
<div style="position:absolute;left:2650.5px;top:358.9px;line-height:0;white-space:pre;font-family:'Liberation Sans', sans-serif;font-size:20.5px;font-weight:400;font-style:normal;color:#111111;letter-spacing:0.365px;">2:59</div>
<div style="position:absolute;left:2650.5px;top:427.2px;line-height:0;white-space:pre;font-family:'Liberation Sans', sans-serif;font-size:42px;font-weight:400;font-style:normal;color:#1d1b20;letter-spacing:-0.534px;">Hello AndroidDen!</div>
<div style="position:absolute;left:2650.5px;top:479.4px;line-height:0;white-space:pre;font-family:'Liberation Sans', sans-serif;font-size:24.5px;font-weight:400;font-style:normal;color:#1d1b20;letter-spacing:-0.035px;">Angka asli: 64, 34, 25, 12, 22, 11, 90</div>
<div style="position:absolute;left:2650.5px;top:513.4px;line-height:0;white-space:pre;font-family:'Liberation Sans', sans-serif;font-size:24.5px;font-weight:400;font-style:normal;color:#4f5b8a;letter-spacing:0.091px;">Angka yang terurut (Bubble Sort): 11, 12, 22, 25,</div>
<div style="position:absolute;left:2650.5px;top:547.7px;line-height:0;white-space:pre;font-family:'Liberation Sans', sans-serif;font-size:24.5px;font-weight:400;font-style:normal;color:#4f5b8a;letter-spacing:-0.165px;">34, 64, 90</div>
<div style='position:absolute;left:2849px;top:1670px;width:160px;height:6px;background:#5f5f63;border-radius:3px;'></div>
<div style='position:absolute;left:3190px;top:1434px;width:55px;height:215px;background:#2b2d30;border-radius:8px;border:2px solid #393b40;box-sizing:border-box'></div>
<div style="position:absolute;left:3204.0px;top:1568.7px;line-height:0;white-space:pre;font-family:'Liberation Sans', sans-serif;font-size:21px;font-weight:700;font-style:normal;color:#dfe1e5;letter-spacing:-1.180px;">1:1</div><svg style='position:absolute;left:0;top:0' width='3360' height='2100'><path d='M597.0,37.0 L605,45.0 L613.0,37.0' fill='none' stroke='#ced0d6' stroke-width='2.4' stroke-linecap='round' stroke-linejoin='round' />
<path d='M874.0,37.0 L882,45.0 L890.0,37.0' fill='none' stroke='#ced0d6' stroke-width='2.4' stroke-linecap='round' stroke-linejoin='round' />
<path d='M1852,52 H1845 V29 H1859 V39' fill='none' stroke='#ced0d6' stroke-width='2.4' stroke-linecap='round' stroke-linejoin='round' />
<path d='M1850,33 H1854' fill='none' stroke='#ced0d6' stroke-width='2.4' stroke-linecap='round' stroke-linejoin='round' />
<path d='M1854,41 H1866 V48 H1854 Z' fill='none' stroke='#b07cf0' stroke-width='2.6' stroke-linecap='round' stroke-linejoin='round' />
<path d='M1853,53 H1861' fill='none' stroke='#b07cf0' stroke-width='2.6' stroke-linecap='round' stroke-linejoin='round' />
<circle cx='1866.5' cy='52.5' r='4.5' fill='#5fd35f'/>
<path d='M2184.0,37.0 L2192,45.0 L2200.0,37.0' fill='none' stroke='#ced0d6' stroke-width='2.4' stroke-linecap='round' stroke-linejoin='round' />
<path d='M2276,49 A14,13 0 0 1 2304,49 Z' fill='none' stroke='#63d68a' stroke-width='2.6' stroke-linecap='round' stroke-linejoin='round' />
<path d='M2281,37 L2278,31 M2299,37 L2302,31' fill='none' stroke='#63d68a' stroke-width='2.4' stroke-linecap='round' stroke-linejoin='round' />
<circle cx='2285' cy='44' r='1.6' fill='#63d68a'/>
<circle cx='2295' cy='44' r='1.6' fill='#63d68a'/>
<circle cx='2303' cy='27' r='7' fill='#69a66f'/>
<path d='M2376.0,37.0 L2384,45.0 L2392.0,37.0' fill='none' stroke='#ced0d6' stroke-width='2.4' stroke-linecap='round' stroke-linejoin='round' />
<path d='M2460,31 A11,11 0 1 0 2461,43' fill='none' stroke='#e8e8e8' stroke-width='2.6' stroke-linecap='round' stroke-linejoin='round' />
<path d='M2461,26 V33 H2454' fill='none' stroke='#e8e8e8' stroke-width='2.6' stroke-linecap='round' stroke-linejoin='round' />
<path d='M2509,39 C2509,32 2527,32 2527,39 V45 C2527,53 2509,53 2509,45 Z' fill='none' stroke='#6ca36f' stroke-width='2.6' stroke-linecap='round' stroke-linejoin='round' />
<path d='M2513,33 C2513,28 2523,28 2523,33' fill='none' stroke='#6ca36f' stroke-width='2.6' stroke-linecap='round' stroke-linejoin='round' />
<path d='M2509,37 L2504,34 M2509,43 H2503 M2509,48 L2504,51 M2527,37 L2532,34 M2527,43 H2533 M2527,48 L2532,51' fill='none' stroke='#6ca36f' stroke-width='2.6' stroke-linecap='round' stroke-linejoin='round' />
<path d='M2576,26 H2596 A4,4 0 0 1 2600,30 V50 A4,4 0 0 1 2596,54 H2576 A4,4 0 0 1 2572,50 V30 A4,4 0 0 1 2576,26 Z' fill='none' stroke='#e8e8e8' stroke-width='2.8' stroke-linecap='round' stroke-linejoin='round' />
<circle cx='2654' cy='29' r='2.8' fill='#ced0d6'/>
<circle cx='2654' cy='40' r='2.8' fill='#ced0d6'/>
<circle cx='2654' cy='51' r='2.8' fill='#ced0d6'/>
<path d='M2743,22.5 H2766 C2771,22.5 2775,26 2776.5,33.5 C2773,31.5 2769,31 2765,31.5 H2761 V37 M2755,32 V56.5 H2758 M2749,31.5 H2743.5 V22.5' fill='none' stroke='#ced0d6' stroke-width='2.5' stroke-linecap='round' stroke-linejoin='round' />
<path d='M2749,22.5 V31.5 H2755' fill='none' stroke='#ced0d6' stroke-width='2.5' stroke-linecap='round' stroke-linejoin='round' />
<path d='M2763,43 L2779.5,50.8 L2763,59 Z' fill='none' stroke='#ced0d6' stroke-width='2.6' stroke-linecap='round' stroke-linejoin='round' />
<path d='M2837,46 H2831 C2826,46 2823.5,42 2823.5,37.5 C2823.5,33 2826,29 2831,29 H2851' fill='none' stroke='#ced0d6' stroke-width='2.5' stroke-linecap='round' stroke-linejoin='round' />
<path d='M2843,22.5 L2851.5,29 L2843,35.5' fill='none' stroke='#ced0d6' stroke-width='2.5' stroke-linecap='round' stroke-linejoin='round' />
<path d='M2841,58 L2849,39.5 L2857,58 M2844,51.5 H2854' fill='none' stroke='#ced0d6' stroke-width='2.5' stroke-linecap='round' stroke-linejoin='round' />
<path d='M2904,23.7 H2936 M2904,34 H2936 M2904,44 H2915 M2904,54 H2915' fill='none' stroke='#ced0d6' stroke-width='2.5' stroke-linecap='round' stroke-linejoin='round' />
<path d='M2925,39.5 L2920,44 L2925,48.5 M2920,44 H2929 C2933,44 2936,46 2936,49 C2936,52 2933,54 2929,54 H2921' fill='none' stroke='#ced0d6' stroke-width='2.5' stroke-linecap='round' stroke-linejoin='round' />
<path d='M2992,34 C2992,26 3009,26 3009,34 V45 C3009,52 3005,55.5 3000.5,55.5 C2996,55.5 2992,52 2992,45 Z' fill='none' stroke='#ced0d6' stroke-width='2.5' stroke-linecap='round' stroke-linejoin='round' />
<path d='M2995,30 C2995,24 3006,24 3006,30' fill='none' stroke='#ced0d6' stroke-width='2.5' stroke-linecap='round' stroke-linejoin='round' />
<path d='M2992,33 L2985,30 M2992,42 H2983.5 M2992,50 L2985,54 M3009,33 L3016,30' fill='none' stroke='#ced0d6' stroke-width='2.5' stroke-linecap='round' stroke-linejoin='round' />
<rect x='3002' y='40' width='20' height='20' fill='#2b2d30'/>
<path d='M3005,56 L3017,44.5 M3009.5,44.5 H3017 V52' fill='none' stroke='#ced0d6' stroke-width='2.5' stroke-linecap='round' stroke-linejoin='round' />
<g transform='translate(3077,40) scale(1.05) translate(-23.5,-19)'>
<path d='M10,30 C9,22 12,18 15,16 C17,12 25,11 31,14.5 C34,16 36,16 37.5,14 C38.5,12 37,8.5 34,8.5 C32.5,8.5 31.5,9.5 31,10.5 M37.5,14 C37,18 33,21 31,23 C29.5,25 29,28 29,30 M10,30 C12,30 13,27 15.5,27 C18,27 18.5,30 20.5,30 C22.5,30 23,27 24.5,27 C27,27 27.5,30 29,30 M14.5,15 C15,19 17,22 19,22 C20.5,22 22,20.5 23.5,19' fill='none' stroke='#ced0d6' stroke-width='2.380952380952381' stroke-linecap='round' stroke-linejoin='round' />
<circle cx='27.5' cy='18.5' r='1.4' fill='#ced0d6'/>
</g>
<rect x='3082' y='42' width='14' height='18' fill='#2b2d30'/>
<path d='M3095,45 L3085,56 M3085,49 V56 H3092' fill='none' stroke='#ced0d6' stroke-width='2.5' stroke-linecap='round' stroke-linejoin='round' />
<circle cx='3157' cy='36' r='11' fill='none' stroke='#ced0d6' stroke-width='2.6'/>
<path d='M3165,44 L3176,56' fill='none' stroke='#ced0d6' stroke-width='2.6' stroke-linecap='round' stroke-linejoin='round' />
<path d='M3256.0,40.0 L3255.9,42.1 L3255.5,44.1 L3251.5,44.8 L3250.8,46.2 L3249.9,47.6 L3248.8,48.8 L3249.7,52.7 L3248.0,53.9 L3246.1,54.8 L3244.1,55.5 L3241.6,52.4 L3240.0,52.5 L3238.4,52.4 L3236.8,52.1 L3233.9,54.8 L3232.0,53.9 L3230.3,52.7 L3228.7,51.3 L3230.1,47.6 L3229.2,46.2 L3228.5,44.8 L3227.9,43.2 L3224.1,42.1 L3224.0,40.0 L3224.1,37.9 L3224.5,35.9 L3228.5,35.2 L3229.2,33.8 L3230.1,32.4 L3231.2,31.2 L3230.3,27.3 L3232.0,26.1 L3233.9,25.2 L3235.9,24.5 L3238.4,27.6 L3240.0,27.5 L3241.6,27.6 L3243.2,27.9 L3246.1,25.2 L3248.0,26.1 L3249.7,27.3 L3251.3,28.7 L3249.9,32.4 L3250.8,33.8 L3251.5,35.2 L3252.1,36.8 L3255.9,37.9 Z' fill='none' stroke='#ced0d6' stroke-width='2.5' stroke-linecap='round' stroke-linejoin='round' />
<circle cx='3240' cy='40' r='5' fill='none' stroke='#ced0d6' stroke-width='2.5'/>
<circle cx='3320' cy='40' r='19' fill='#1f2a44' stroke='#548af7' stroke-width='2.8'/>
<circle cx='3320' cy='34' r='7' fill='#2d3f6b' stroke='#548af7' stroke-width='2.6'/>
<path d='M3306,53 C3309,46 3315,44 3320,44 C3325,44 3331,46 3334,53' fill='#2d3f6b' stroke='#548af7' stroke-width='2.6' stroke-linecap='round' stroke-linejoin='round' />
<path d='M23,170 A2.5,2.5 0 0 1 25.5,167.5 H35 L40,172.5 H55 A2.5,2.5 0 0 1 57.5,175 V193.5 A2.5,2.5 0 0 1 55,196 H25.5 A2.5,2.5 0 0 1 23,193.5 Z' fill='none' stroke='#ced0d6' stroke-width='2.6' stroke-linecap='round' stroke-linejoin='round' />
<circle cx='38' cy='252.7' r='6.8' fill='none' stroke='#ced0d6' stroke-width='2.6'/>
<path d='M25.5,265.5 H36.5 V276.5 H25.5 Z' fill='none' stroke='#ced0d6' stroke-width='2.6' stroke-linecap='round' stroke-linejoin='round' />
<path d='M49.3,261.5 L56,272.5 H42.5 Z' fill='none' stroke='#ced0d6' stroke-width='2.6' stroke-linecap='round' stroke-linejoin='round' />
<circle cx='27' cy='342' r='3' fill='#ced0d6'/>
<circle cx='40' cy='342' r='3' fill='#ced0d6'/>
<circle cx='53' cy='342' r='3' fill='#ced0d6'/>
<path d='M28,1506 L53,1519 L28,1533 Z' fill='none' stroke='#ced0d6' stroke-width='2.6' stroke-linecap='round' stroke-linejoin='round' />
<circle cx='53' cy='1507' r='7' fill='#6aa56e'/>
<g transform='translate(23,1583) scale(1.0)'>
<path d='M0,0.5 A0.5,0.5 0 0 1 0.5,0 H25 C30,0 33,4 34.5,9.5 C31,7 27,6.5 23,7 H21.5 V34 H11 V7 H7.5 V10.5 H0.5 A0.5,0.5 0 0 1 0,10 Z' fill='none' stroke='#ced0d6' stroke-width='2.4' stroke-linecap='round' stroke-linejoin='round' />
</g>
<path d='M28,1665 H52 L58,1673 L40,1695 L22,1673 Z M22,1673 H58 M33,1665 L36,1673 L40,1695 L44,1673 L47,1665' fill='none' stroke='#ced0d6' stroke-width='2.4' stroke-linecap='round' stroke-linejoin='round' />
<path d='M33,1749 L39,1754 H51 L57,1749 V1768 A6,6 0 0 1 51,1774 H39 A6,6 0 0 1 33,1768 Z' fill='none' stroke='#ced0d6' stroke-width='2.4' stroke-linecap='round' stroke-linejoin='round' />
<path d='M23,1756 H32 M25,1763 H32 M24,1770 H32' fill='none' stroke='#ced0d6' stroke-width='2.4' stroke-linecap='round' stroke-linejoin='round' />
<circle cx='39.5' cy='1762' r='1.8' fill='#ced0d6'/>
<circle cx='50' cy='1762' r='1.8' fill='#ced0d6'/>
<path d='M42,1766 H48 L45,1769 Z' fill='#ced0d6' stroke='none' />
<circle cx='40' cy='1839.6' r='17.5' fill='none' stroke='#ced0d6' stroke-width='2.6'/>
<path d='M40,1830 V1841' fill='none' stroke='#ced0d6' stroke-width='3' stroke-linecap='round' stroke-linejoin='round' />
<circle cx='40' cy='1848' r='2' fill='#ced0d6'/>
<path d='M25,1905 H55 A2,2 0 0 1 57,1907 V1933 A2,2 0 0 1 55,1935 H25 A2,2 0 0 1 23,1933 V1907 A2,2 0 0 1 25,1905 Z' fill='none' stroke='#ced0d6' stroke-width='2.6' stroke-linecap='round' stroke-linejoin='round' />
<path d='M31,1912 L37.5,1917.5 L31,1923 M40,1925 H49' fill='none' stroke='#ced0d6' stroke-width='2.6' stroke-linecap='round' stroke-linejoin='round' />
<circle cx='31' cy='1988' r='6' fill='none' stroke='#ced0d6' stroke-width='2.5'/>
<circle cx='48.5' cy='1993' r='6' fill='none' stroke='#ced0d6' stroke-width='2.5'/>
<path d='M31,1994 V2016 M31,2008 H42 C46,2008 48.5,2005 48.5,1999' fill='none' stroke='#ced0d6' stroke-width='2.5' stroke-linecap='round' stroke-linejoin='round' />
<path d='M219.0,181.0 L227,189.0 L235.0,181.0' fill='none' stroke='#ced0d6' stroke-width='2.4' stroke-linecap='round' stroke-linejoin='round' />
<path d='M858,181 H884 M871,168 V194' fill='none' stroke='#ced0d6' stroke-width='2.4' stroke-linecap='round' stroke-linejoin='round' />
<path d='M880,198 L888,190 L888,198 Z' fill='#ced0d6' stroke='none' />
<path d='M905,162 V201' fill='none' stroke='#4e5157' stroke-width='2' stroke-linecap='round' stroke-linejoin='round' />
<circle cx='938' cy='182' r='13.5' fill='none' stroke='#ced0d6' stroke-width='2.6'/>
<path d='M938,168 V175 M938,189 V196 M924,182 H931 M945,182 H952' fill='none' stroke='#ced0d6' stroke-width='2.4' stroke-linecap='round' stroke-linejoin='round' />
<path d='M982,176 L990,168 L998,176 M982,188 L990,196 L998,188' fill='none' stroke='#ced0d6' stroke-width='2.4' stroke-linecap='round' stroke-linejoin='round' />
<path d='M1034,170 L1042,178 L1050,170 M1034,194 L1042,186 L1050,194' fill='none' stroke='#ced0d6' stroke-width='2.4' stroke-linecap='round' stroke-linejoin='round' />
<circle cx='1094' cy='172' r='2.8' fill='#ced0d6'/>
<circle cx='1094' cy='182' r='2.8' fill='#ced0d6'/>
<circle cx='1094' cy='192' r='2.8' fill='#ced0d6'/>
<path d='M1133,182 H1159' fill='none' stroke='#ced0d6' stroke-width='2.6' stroke-linecap='round' stroke-linejoin='round' />
<path d='M114.5,252.25 L122,259.75 L129.5,252.25' fill='none' stroke='#a8abb0' stroke-width='2.4' stroke-linecap='round' stroke-linejoin='round' />
<path d='M166,268 H152 A1.5,1.5 0 0 1 150.5,266.5 V246 A1.5,1.5 0 0 1 152,244.5 H160 L164,249 H176.5 A1.5,1.5 0 0 1 178,250.5 V257' fill='none' stroke='#ced0d6' stroke-width='2.3' stroke-linecap='round' stroke-linejoin='round' />
<path d='M169,259 H177 A2,2 0 0 1 179,261 V269 A2,2 0 0 1 177,271 H169 A2,2 0 0 1 167,269 V261 A2,2 0 0 1 169,259 Z' fill='#253627' stroke='#5fd68a' stroke-width='2.5' stroke-linecap='round' stroke-linejoin='round' />
<path d='M155.75,296.5 L163.25,304 L155.75,311.5' fill='none' stroke='#a8abb0' stroke-width='2.4' stroke-linecap='round' stroke-linejoin='round' />
<path d='M155.75,344.5 L163.25,352 L155.75,359.5' fill='none' stroke='#a8abb0' stroke-width='2.4' stroke-linecap='round' stroke-linejoin='round' />
<path d='M155.75,392.5 L163.25,400 L155.75,407.5' fill='none' stroke='#a8abb0' stroke-width='2.4' stroke-linecap='round' stroke-linejoin='round' />
<path d='M189.5,296 A2,2 0 0 1 191.5,294 H199 L203,299 H213 A2,2 0 0 1 215,301 V313 A2,2 0 0 1 213,315 H191.5 A2,2 0 0 1 189.5,313 Z' fill='#25324d' stroke='#548af7' stroke-width='2.5' stroke-linecap='round' stroke-linejoin='round' />
<path d='M189.5,344 A2,2 0 0 1 191.5,342 H199 L203,347 H213 A2,2 0 0 1 215,349 V361 A2,2 0 0 1 213,363 H191.5 A2,2 0 0 1 189.5,361 Z' fill='#25324d' stroke='#548af7' stroke-width='2.5' stroke-linecap='round' stroke-linejoin='round' />
<path d='M203,411 H191.5 A2,2 0 0 1 189.5,409 V392 A2,2 0 0 1 191.5,390 H199 L203,395 H213 A2,2 0 0 1 215,397 V402' fill='#43454a' stroke='#ced0d6' stroke-width='2.3' stroke-linecap='round' stroke-linejoin='round' />
<rect x='203' y='401' width='15' height='13' fill='#2b2d30'/>
<path d='M205,403 H217 M205,407.5 H217 M205,412 H217' fill='none' stroke='#f2c55c' stroke-width='2.4' stroke-linecap='round' stroke-linejoin='round' />
<path d='M203,459 H191.5 A2,2 0 0 1 189.5,457 V440 A2,2 0 0 1 191.5,438 H199 L203,443 H213 A2,2 0 0 1 215,445 V450' fill='#43454a' stroke='#ced0d6' stroke-width='2.3' stroke-linecap='round' stroke-linejoin='round' />
<rect x='203' y='449' width='15' height='13' fill='#2b2d30'/>
<path d='M205,451 H217 M205,455.5 H217 M205,460 H217' fill='none' stroke='#f2c55c' stroke-width='2.4' stroke-linecap='round' stroke-linejoin='round' />
<path d='M117.75,488.5 L125.25,496 L117.75,503.5' fill='none' stroke='#a8abb0' stroke-width='2.4' stroke-linecap='round' stroke-linejoin='round' />
<g transform='translate(164,495) scale(1.0) translate(-23.5,-19)'>
<path d='M10,30 C9,22 12,18 15,16 C17,12 25,11 31,14.5 C34,16 36,16 37.5,14 C38.5,12 37,8.5 34,8.5 C32.5,8.5 31.5,9.5 31,10.5 M37.5,14 C37,18 33,21 31,23 C29.5,25 29,28 29,30 M10,30 C12,30 13,27 15.5,27 C18,27 18.5,30 20.5,30 C22.5,30 23,27 24.5,27 C27,27 27.5,30 29,30 M14.5,15 C15,19 17,22 19,22 C20.5,22 22,20.5 23.5,19' fill='none' stroke='#ced0d6' stroke-width='2.3' stroke-linecap='round' stroke-linejoin='round' />
<circle cx='27.5' cy='18.5' r='1.4' fill='#ced0d6'/>
</g>
<path d='M1219,171 H1241.5 L1230,182 L1241.5,193 H1219 Z' fill='#2d2538' stroke='#a97ef0' stroke-width='2.5' stroke-linecap='round' stroke-linejoin='round' />
<path d='M1463,175 L1477,189 M1477,175 L1463,189' fill='none' stroke='#8c8f96' stroke-width='2.3' stroke-linecap='round' stroke-linejoin='round' />
<g transform='translate(1539,181) scale(0.9) translate(-23.5,-19)'>
<path d='M10,30 C9,22 12,18 15,16 C17,12 25,11 31,14.5 C34,16 36,16 37.5,14 C38.5,12 37,8.5 34,8.5 C32.5,8.5 31.5,9.5 31,10.5 M37.5,14 C37,18 33,21 31,23 C29.5,25 29,28 29,30 M10,30 C12,30 13,27 15.5,27 C18,27 18.5,30 20.5,30 C22.5,30 23,27 24.5,27 C27,27 27.5,30 29,30 M14.5,15 C15,19 17,22 19,22 C20.5,22 22,20.5 23.5,19' fill='none' stroke='#ced0d6' stroke-width='2.4444444444444446' stroke-linecap='round' stroke-linejoin='round' />
<circle cx='27.5' cy='18.5' r='1.4' fill='#ced0d6'/>
</g>
<rect x='1540' y='182' width='17' height='17' fill='#1e1f22'/>
<path d='M1543,185 H1555 L1549,191 L1555,197 H1543 Z' fill='#2d2538' stroke='#a97ef0' stroke-width='2.3' stroke-linecap='round' stroke-linejoin='round' />
<polyline points='1256,196 1262,200 1268,196 1274,200 1280,196 1286,200 1292,196 1298,200 1304,196 1310,200 1316,196 1322,200 1328,196 1334,200 1340,196 1346,200 1352,196 1358,200 1364,196 1370,200 1376,196 1382,200 1388,196 1394,200 1400,196 1406,200 1412,196 1418,200 1424,196 1430,200 1436,196' fill='none' stroke='#e0606b' stroke-width='1.8'/>
<path d='M2350,171 H2370 M2350,178 H2370 M2350,185 H2370 M2350,192 H2370' fill='none' stroke='#ced0d6' stroke-width='2.4' stroke-linecap='round' stroke-linejoin='round' />
<path d='M2402,172 H2412 M2402,178 H2412 M2402,185 H2412 M2402,191 H2412' fill='none' stroke='#ced0d6' stroke-width='2.4' stroke-linecap='round' stroke-linejoin='round' />
<path d='M2420,170 H2426 A3,3 0 0 1 2429,173 V191 A3,3 0 0 1 2426,194 H2420 A3,3 0 0 1 2417,191 V173 A3,3 0 0 1 2420,170 Z' fill='none' stroke='#ced0d6' stroke-width='2.4' stroke-linecap='round' stroke-linejoin='round' />
<path d='M2463,170 H2481 A3,3 0 0 1 2484,173 V191 A3,3 0 0 1 2481,194 H2463 A3,3 0 0 1 2460,191 V173 A3,3 0 0 1 2463,170 Z' fill='none' stroke='#ced0d6' stroke-width='2.4' stroke-linecap='round' stroke-linejoin='round' />
<path d='M2461,182 L2479,194' fill='none' stroke='#ced0d6' stroke-width='2.4' stroke-linecap='round' stroke-linejoin='round' />
<circle cx='2476' cy='178' r='2.8' fill='none' stroke='#ced0d6' stroke-width='2.2'/>
<path d='M2507,163 V202' fill='none' stroke='#4e5157' stroke-width='2' stroke-linecap='round' stroke-linejoin='round' />
<circle cx='2540' cy='172' r='2.8' fill='#ced0d6'/>
<circle cx='2540' cy='182' r='2.8' fill='#ced0d6'/>
<circle cx='2540' cy='192' r='2.8' fill='#ced0d6'/>
<circle cx='2380' cy='252' r='12' fill='#db5c5c'/>
<path d='M2380,245 V254' fill='none' stroke='#1e1f22' stroke-width='3.4' stroke-linecap='round' stroke-linejoin='round' />
<circle cx='2380' cy='259.5' r='2' fill='#1e1f22'/>
<path d='M2439,249 L2446,256 L2460,242' fill='none' stroke='#5fa865' stroke-width='3.2' stroke-linecap='round' stroke-linejoin='round' />
<path d='M2438,264 L2442,260 L2446,264 L2450,260 L2454,264 L2458,260' fill='none' stroke='#5fa865' stroke-width='1.8' stroke-linecap='round' stroke-linejoin='round' />
<path d='M2504.0,256.0 L2512,248.0 L2520.0,256.0' fill='none' stroke='#ced0d6' stroke-width='2.4' stroke-linecap='round' stroke-linejoin='round' />
<path d='M2546.0,248.0 L2554,256.0 L2562.0,248.0' fill='none' stroke='#ced0d6' stroke-width='2.4' stroke-linecap='round' stroke-linejoin='round' />
<path d='M1325.5,329.0 L1332.5,336 L1325.5,343.0' fill='none' stroke='#8c8f96' stroke-width='2.2' stroke-linecap='round' stroke-linejoin='round' />
<path d='M1249.5,456 L1271,468 L1249.5,480 Z' fill='#253322' stroke='#5fa865' stroke-width='2.5' stroke-linecap='round' stroke-linejoin='round' />
<path d='M1290,462 L1281,468.3 L1290,475 M1299,456.5 L1292.5,480 M1302,462 L1311,468.3 L1302,475' fill='none' stroke='#d9925a' stroke-width='2.5' stroke-linecap='round' stroke-linejoin='round' />
<path d='M1303.5,504.5 A10,10 0 1 0 1304.5,516' fill='#25324d' stroke='#548af7' stroke-width='2.5'/>
<circle cx='1294.7' cy='512' r='5' fill='#25324d' stroke='#548af7' stroke-width='2.5'/>
<path d='M1307,514 V499 M1302,504 L1307,499 L1312,504' fill='none' stroke='#e06c6c' stroke-width='2.3' stroke-linecap='round' stroke-linejoin='round' />
<path d='M2618,194 H2611 V171 H2625 V181' fill='none' stroke='#ced0d6' stroke-width='2.4' stroke-linecap='round' stroke-linejoin='round' />
<path d='M2616,175 H2620' fill='none' stroke='#ced0d6' stroke-width='2.4' stroke-linecap='round' stroke-linejoin='round' />
<path d='M2620,183 H2632 V190 H2620 Z' fill='none' stroke='#b07cf0' stroke-width='2.6' stroke-linecap='round' stroke-linejoin='round' />
<path d='M2619,195 H2627' fill='none' stroke='#b07cf0' stroke-width='2.6' stroke-linecap='round' stroke-linejoin='round' />
<circle cx='2632.5' cy='194.5' r='4.5' fill='#5fd35f'/>
<path d='M2959,175 L2973,189 M2973,175 L2959,189' fill='none' stroke='#8c8f96' stroke-width='2.3' stroke-linecap='round' stroke-linejoin='round' />
<path d='M3009,182 H3033 M3021,170 V194' fill='none' stroke='#ced0d6' stroke-width='2.4' stroke-linecap='round' stroke-linejoin='round' />
<path d='M3134,170 H3120 A2,2 0 0 0 3118,172 V192 A2,2 0 0 0 3120,194 H3142 A2,2 0 0 0 3144,192 V180' fill='none' stroke='#ced0d6' stroke-width='2.4' stroke-linecap='round' stroke-linejoin='round' />
<path d='M3130,184 L3144,170 M3136,170 H3144 V178' fill='none' stroke='#ced0d6' stroke-width='2.4' stroke-linecap='round' stroke-linejoin='round' />
<circle cx='3184' cy='172' r='2.8' fill='#ced0d6'/>
<circle cx='3184' cy='182' r='2.8' fill='#ced0d6'/>
<circle cx='3184' cy='192' r='2.8' fill='#ced0d6'/>
<path d='M3223,182 H3249' fill='none' stroke='#ced0d6' stroke-width='2.6' stroke-linecap='round' stroke-linejoin='round' />
<path d='M2613,249 A12,12 0 1 0 2627,249' fill='none' stroke='#ced0d6' stroke-width='2.5' stroke-linecap='round' stroke-linejoin='round' />
<path d='M2620,246.5 V259' fill='none' stroke='#ced0d6' stroke-width='2.5' stroke-linecap='round' stroke-linejoin='round' />
<path d='M2658.5,253.5 H2664.5 L2671.5,247.5 V269.5 L2664.5,263.5 H2658.5 Z' fill='none' stroke='#ced0d6' stroke-width='2.4' stroke-linecap='round' stroke-linejoin='round' />
<path d='M2676,252 C2678,255 2678,262 2676,265 M2681,248 C2685,253 2685,264 2681,269' fill='none' stroke='#ced0d6' stroke-width='2.4' stroke-linecap='round' stroke-linejoin='round' />
<path d='M2710.5,253.5 H2716.5 L2723.5,247.5 V269.5 L2716.5,263.5 H2710.5 Z' fill='none' stroke='#ced0d6' stroke-width='2.4' stroke-linecap='round' stroke-linejoin='round' />
<path d='M2728,252 C2730,255 2730,262 2728,265' fill='none' stroke='#ced0d6' stroke-width='2.4' stroke-linecap='round' stroke-linejoin='round' />
<path d='M2757,238.5 V277.5' fill='none' stroke='#4e5157' stroke-width='2' stroke-linecap='round' stroke-linejoin='round' />
<path d='M2777,247 H2790 V269.5 H2777 Z M2781,251 H2784' fill='none' stroke='#ced0d6' stroke-width='2.4' stroke-linecap='round' stroke-linejoin='round' />
<path d='M2795,248 C2803,252 2804,265 2796,270' fill='none' stroke='#548af7' stroke-width='2.5' stroke-linecap='round' stroke-linejoin='round' />
<path d='M2794,253 L2795,248 L2800,247' fill='none' stroke='#548af7' stroke-width='2.5' stroke-linecap='round' stroke-linejoin='round' />
<path d='M2841.5,247 H2854.5 V269.5 H2841.5 Z M2846,251 H2849' fill='none' stroke='#ced0d6' stroke-width='2.4' stroke-linecap='round' stroke-linejoin='round' />
<path d='M2836,248 C2828,252 2827,265 2835,270' fill='none' stroke='#548af7' stroke-width='2.5' stroke-linecap='round' stroke-linejoin='round' />
<path d='M2837,253 L2836,248 L2831,247' fill='none' stroke='#548af7' stroke-width='2.5' stroke-linecap='round' stroke-linejoin='round' />
<path d='M2875,238.5 V277.5' fill='none' stroke='#4e5157' stroke-width='2' stroke-linecap='round' stroke-linejoin='round' />
<path d='M2900.5,258 L2915.5,249.5 V266.5 Z' fill='none' stroke='#ced0d6' stroke-width='2.4' stroke-linecap='round' stroke-linejoin='round' />
<circle cx='2960' cy='258' r='9.8' fill='none' stroke='#ced0d6' stroke-width='2.4'/>
<path d='M3004.5,250 H3019.5 V265.5 H3004.5 Z' fill='none' stroke='#ced0d6' stroke-width='2.4' stroke-linecap='round' stroke-linejoin='round' />
<path d='M3045,238.5 V277.5' fill='none' stroke='#4e5157' stroke-width='2' stroke-linecap='round' stroke-linejoin='round' />
<path d='M3077,270 H3071 V246.5 H3086 V255' fill='none' stroke='#ced0d6' stroke-width='2.4' stroke-linecap='round' stroke-linejoin='round' />
<path d='M3076,251 H3080' fill='none' stroke='#ced0d6' stroke-width='2.4' stroke-linecap='round' stroke-linejoin='round' />
<path d='M3093.5,266.0 L3093.4,267.0 L3093.2,267.9 L3091.4,268.2 L3091.1,268.9 L3090.6,269.6 L3090.1,270.1 L3090.6,272.0 L3089.8,272.5 L3088.9,272.9 L3087.9,273.2 L3086.8,271.8 L3086.0,271.9 L3085.2,271.8 L3084.5,271.7 L3083.1,272.9 L3082.2,272.5 L3081.4,272.0 L3080.7,271.3 L3081.4,269.6 L3080.9,268.9 L3080.6,268.2 L3080.3,267.5 L3078.6,267.0 L3078.5,266.0 L3078.6,265.0 L3078.8,264.1 L3080.6,263.8 L3080.9,263.1 L3081.4,262.4 L3081.9,261.9 L3081.4,260.0 L3082.2,259.5 L3083.1,259.1 L3084.1,258.8 L3085.2,260.2 L3086.0,260.1 L3086.8,260.2 L3087.5,260.3 L3088.9,259.1 L3089.8,259.5 L3090.6,260.0 L3091.3,260.7 L3090.6,262.4 L3091.1,263.1 L3091.4,263.8 L3091.7,264.5 L3093.4,265.0 Z' fill='none' stroke='#ced0d6' stroke-width='2.2' stroke-linecap='round' stroke-linejoin='round' />
<circle cx='3086' cy='266' r='2' fill='none' stroke='#ced0d6' stroke-width='2.2'/>
<path d='M3155,255 V247 H3175' fill='none' stroke='#ced0d6' stroke-width='2.4' stroke-linecap='round' stroke-linejoin='round' />
<path d='M3159,268 V251 H3178 V258 M3167,268 H3159' fill='none' stroke='#ced0d6' stroke-width='2.4' stroke-linecap='round' stroke-linejoin='round' />
<circle cx='3174' cy='264' r='5.5' fill='none' stroke='#ced0d6' stroke-width='2.4'/>
<path d='M3178,268 L3183,273' fill='none' stroke='#ced0d6' stroke-width='2.4' stroke-linecap='round' stroke-linejoin='round' />
<path d='M3201,238.5 V277.5' fill='none' stroke='#4e5157' stroke-width='2' stroke-linecap='round' stroke-linejoin='round' />
<path d='M3226,262 A11,11 0 0 1 3246,252 M3246,264 A11,11 0 0 1 3226,265' fill='none' stroke='#62b36a' stroke-width='2.5' stroke-linecap='round' stroke-linejoin='round' />
<path d='M3242,252 L3246.5,246.5 L3251,253 M3221,259 L3225.5,265 L3231,259' fill='none' stroke='#62b36a' stroke-width='2.5' stroke-linecap='round' stroke-linejoin='round' />
<path d='M2622,311 H2609 A2,2 0 0 1 2607,309 V297 A2,2 0 0 1 2609,295 H2629 A2,2 0 0 1 2631,297 V304' fill='none' stroke='#ced0d6' stroke-width='2.3' stroke-linecap='round' stroke-linejoin='round' />
<circle cx='2612' cy='299.5' r='1.3' fill='#ced0d6'/>
<circle cx='2617' cy='299.5' r='1.3' fill='#ced0d6'/>
<circle cx='2622' cy='299.5' r='1.3' fill='#ced0d6'/>
<circle cx='2627' cy='299.5' r='1.3' fill='#ced0d6'/>
<circle cx='2614' cy='304' r='1.3' fill='#ced0d6'/>
<circle cx='2619' cy='304' r='1.3' fill='#ced0d6'/>
<circle cx='2624' cy='304' r='1.3' fill='#ced0d6'/>
<path d='M2614,307.5 H2620' fill='none' stroke='#ced0d6' stroke-width='2' stroke-linecap='round' stroke-linejoin='round' />
<path d='M2629,307 A4.5,4.5 0 0 1 2633.5,311.5 V315 A4.5,4.5 0 0 1 2629,319.5 A4.5,4.5 0 0 1 2624.5,315 V311.5 A4.5,4.5 0 0 1 2629,307 Z' fill='none' stroke='#ced0d6' stroke-width='2.3' stroke-linecap='round' stroke-linejoin='round' />
<path d='M2653,286.5 V325.5' fill='none' stroke='#4e5157' stroke-width='2' stroke-linecap='round' stroke-linejoin='round' />
<path d='M2675,299 H2680 L2683,295 H2690 L2693,299 H2697 A2.5,2.5 0 0 1 2699.5,301.5 V315 A2.5,2.5 0 0 1 2697,317.5 H2675 A2.5,2.5 0 0 1 2672.5,315 V301.5 A2.5,2.5 0 0 1 2675,299 Z' fill='none' stroke='#ced0d6' stroke-width='2.4' stroke-linecap='round' stroke-linejoin='round' />
<circle cx='2686' cy='307.5' r='5.5' fill='none' stroke='#ced0d6' stroke-width='2.4'/>
<circle cx='2695' cy='303' r='1.3' fill='#ced0d6'/>
<path d='M2724.5,299 H2742 V315.5 H2724.5 Z M2742,304 L2751.5,298 V316 L2742,310' fill='none' stroke='#ced0d6' stroke-width='2.4' stroke-linecap='round' stroke-linejoin='round' />
<path d='M2771,286.5 V325.5' fill='none' stroke='#4e5157' stroke-width='2' stroke-linecap='round' stroke-linejoin='round' />
<path d='M2792.5,311 V317.5 H2815.5 V311 M2804,314 V295 M2797.5,301 L2804,295 L2810.5,301' fill='none' stroke='#ced0d6' stroke-width='2.4' stroke-linecap='round' stroke-linejoin='round' />
<path d='M2844.5,311 V317.5 H2867.5 V311 M2856,295 V314 M2849.5,308 L2856,314 L2862.5,308' fill='none' stroke='#ced0d6' stroke-width='2.4' stroke-linecap='round' stroke-linejoin='round' />
<path d='M2889,286.5 V325.5' fill='none' stroke='#4e5157' stroke-width='2' stroke-linecap='round' stroke-linejoin='round' />
<path d='M2912,297 A11,11 0 1 1 2912,315' fill='none' stroke='#ced0d6' stroke-width='2.4' stroke-linecap='round' stroke-linejoin='round' />
<path d='M2911,292 V299 H2918' fill='none' stroke='#ced0d6' stroke-width='2.4' stroke-linecap='round' stroke-linejoin='round' />
<path d='M2921.5,311 V304.5 H2928' fill='none' stroke='#ced0d6' stroke-width='2.4' stroke-linecap='round' stroke-linejoin='round' />
<circle cx='2974' cy='296' r='2.8' fill='#ced0d6'/>
<circle cx='2974' cy='306' r='2.8' fill='#ced0d6'/>
<circle cx='2974' cy='316' r='2.8' fill='#ced0d6'/>
<path d='M3305,193 H3336 L3332,186 V178 C3332,170 3327,165 3320,165 C3313,165 3308,170 3308,178 V186 Z' fill='none' stroke='#ced0d6' stroke-width='2.5' stroke-linecap='round' stroke-linejoin='round' />
<path d='M3315,197 H3325 A5,3 0 0 1 3315,197 Z' fill='#ced0d6' stroke='none' />
<circle cx='3333' cy='169' r='7' fill='#d65f5f'/>
<g transform='translate(3320,263) scale(1.35) translate(-23.5,-19)'>
<path d='M10,30 C9,22 12,18 15,16 C17,12 25,11 31,14.5 C34,16 36,16 37.5,14 C38.5,12 37,8.5 34,8.5 C32.5,8.5 31.5,9.5 31,10.5 M37.5,14 C37,18 33,21 31,23 C29.5,25 29,28 29,30 M10,30 C12,30 13,27 15.5,27 C18,27 18.5,30 20.5,30 C22.5,30 23,27 24.5,27 C27,27 27.5,30 29,30 M14.5,15 C15,19 17,22 19,22 C20.5,22 22,20.5 23.5,19' fill='none' stroke='#ced0d6' stroke-width='1.8518518518518516' stroke-linecap='round' stroke-linejoin='round' />
<circle cx='27.5' cy='18.5' r='1.4' fill='#ced0d6'/>
</g>
<path d='M3315,358 H3305 V327 H3325 V343' fill='none' stroke='#ced0d6' stroke-width='2.4' stroke-linecap='round' stroke-linejoin='round' />
<path d='M3311,333 H3316' fill='none' stroke='#ced0d6' stroke-width='2.4' stroke-linecap='round' stroke-linejoin='round' />
<path d='M3314.5,359 A11.5,11 0 0 1 3337.5,359 Z' fill='none' stroke='#ced0d6' stroke-width='2.4' stroke-linecap='round' stroke-linejoin='round' />
<path d='M3318,347 L3315,343 M3334,347 L3337,343' fill='none' stroke='#ced0d6' stroke-width='2.3' stroke-linecap='round' stroke-linejoin='round' />
<path d='M3311,438 H3304.5 V408 H3322 V421' fill='none' stroke='#ced0d6' stroke-width='2.4' stroke-linecap='round' stroke-linejoin='round' />
<path d='M3310,413 H3315' fill='none' stroke='#ced0d6' stroke-width='2.4' stroke-linecap='round' stroke-linejoin='round' />
<path d='M3315,423 H3335.5 V433 H3315 Z M3314,439.5 H3336' fill='none' stroke='#ced0d6' stroke-width='2.4' stroke-linecap='round' stroke-linejoin='round' />
<circle cx='3333' cy='409.5' r='7' fill='#6aa56e'/>
<path d='M3320,484 C3321,494 3327,500 3337,501.5 C3327,503 3321,509 3320,519 C3319,509 3313,503 3303,501.5 C3313,500 3319,494 3320,484 Z' fill='#ced0d6' stroke='none' />
<path d='M2706,354 C2709,352 2714,350.5 2713,350.5 C2716,351 2719,353 2720,354 V361 C2720,365 2716,368 2713,369 C2710,368 2706,365 2706,361 Z' fill='none' stroke='#111' stroke-width='2.2' stroke-linecap='round' stroke-linejoin='round' />
<path d='M2712,351.5 C2710,354 2710,357 2713,359 C2717,361 2718,364 2715,368' fill='none' stroke='#111' stroke-width='2' stroke-linecap='round' stroke-linejoin='round' />
<path d='M3085,362.5 V366' fill='none' stroke='#8a8a8a' stroke-width='3.6' stroke-linecap='round' stroke-linejoin='round' />
<path d='M3092.2,358.6 V366' fill='none' stroke='#8a8a8a' stroke-width='3.6' stroke-linecap='round' stroke-linejoin='round' />
<path d='M3099.4,354.8 V366' fill='none' stroke='#8a8a8a' stroke-width='3.6' stroke-linecap='round' stroke-linejoin='round' />
<path d='M3106.5,351.7 V366' fill='none' stroke='#8a8a8a' stroke-width='3.6' stroke-linecap='round' stroke-linejoin='round' />
<path d='M3119.5,355.5 C3125,351 3134,351 3140,355.5' fill='none' stroke='#111' stroke-width='3.6' stroke-linecap='round' stroke-linejoin='round' />
<path d='M3124,360 C3127,357.5 3132,357.5 3135,360' fill='none' stroke='#111' stroke-width='3.6' stroke-linecap='round' stroke-linejoin='round' />
<circle cx='3129.5' cy='366' r='2.3' fill='#111'/>
<rect x='3150.7' y='350' width='35' height='19' rx='5' fill='#111'/>
<rect x='3186.5' y='354.8' width='3.5' height='9' rx='1.5' fill='#111'/>
<path d='M3205,1463 H3229 M3217,1451 V1475' fill='none' stroke='#dfe1e5' stroke-width='2' stroke-linecap='round' stroke-linejoin='round' />
<path d='M3205,1515 H3229' fill='none' stroke='#6f737a' stroke-width='2' stroke-linecap='round' stroke-linejoin='round' />
<rect x='3205' y='1608.5' width='25' height='23' rx='3' fill='none' stroke='#5a5d63' stroke-width='2'/>
<path d='M3210,1619 V1614 H3215 M3225,1621 V1626 H3220' fill='none' stroke='#5a5d63' stroke-width='2' stroke-linecap='round' stroke-linejoin='round' />
<path d='M309,1727 L323,1741 M323,1727 L309,1741' fill='none' stroke='#8c8f96' stroke-width='2.3' stroke-linecap='round' stroke-linejoin='round' />
<path d='M547,1727 L561,1741 M561,1727 L547,1741' fill='none' stroke='#8c8f96' stroke-width='2.3' stroke-linecap='round' stroke-linejoin='round' />
<path d='M807,1727 L821,1741 M821,1727 L807,1741' fill='none' stroke='#8c8f96' stroke-width='2.3' stroke-linecap='round' stroke-linejoin='round' />
<g transform='translate(106.5,1796.5) scale(0.8)'>
<path d='M0,0.5 A0.5,0.5 0 0 1 0.5,0 H25 C30,0 33,4 34.5,9.5 C31,7 27,6.5 23,7 H21.5 V34 H11 V7 H7.5 V10.5 H0.5 A0.5,0.5 0 0 1 0,10 Z' fill='none' stroke='#ced0d6' stroke-width='2.75' stroke-linecap='round' stroke-linejoin='round' />
</g>
<path d='M100,1843 H140 M100,1908.5 H140' fill='none' stroke='#4e5157' stroke-width='2' stroke-linecap='round' stroke-linejoin='round' />
<rect x='108' y='1864' width='24' height='24' rx='4' fill='#5e5e5e'/>
<path d='M112,1930.5 H128 L125,1940 L129.5,1947 H110.5 L115,1940 Z M120,1947 V1956' fill='none' stroke='#ced0d6' stroke-width='2.2' stroke-linecap='round' stroke-linejoin='round' />
<path d='M104,1994 C110,1984 130,1984 136,1994 C130,2004 110,2004 104,1994 Z' fill='none' stroke='#ced0d6' stroke-width='2.2' stroke-linecap='round' stroke-linejoin='round' />
<circle cx='120' cy='1994' r='5.5' fill='none' stroke='#ced0d6' stroke-width='2.2'/>
<path d='M131,2012 L138,2005 V2012 Z' fill='#ced0d6' stroke='none' />
<path d='M191.7,1802.0 L199.7,1810.0 L207.7,1802.0' fill='none' stroke='#a8abb0' stroke-width='2.2' stroke-linecap='round' stroke-linejoin='round' />
<path d='M231.5,1806 L238,1813 L251.5,1799.5' fill='none' stroke='#5fa865' stroke-width='3.6' stroke-linecap='round' stroke-linejoin='round' />
<path d='M268,1858 V1865.5 H292 V1858 M280,1842 V1862 M273.5,1855.5 L280,1862 L286.5,1855.5' fill='none' stroke='#ced0d6' stroke-width='2.3' stroke-linecap='round' stroke-linejoin='round' />
<path d='M3226,1800 H3254 M3226,1818 H3236 M3240,1818 H3249 A5.5,5.5 0 0 0 3249,1807 H3226' fill='none' stroke='#ced0d6' stroke-width='2.2' stroke-linecap='round' stroke-linejoin='round' />
<path d='M3244,1814 L3240,1818 L3244,1822' fill='none' stroke='#ced0d6' stroke-width='2.2' stroke-linecap='round' stroke-linejoin='round' />
<path d='M3226,1852 H3236 M3226,1862 H3236 M3226,1872 H3254 M3246,1850 V1866 M3240,1860 L3246,1866 L3252,1860' fill='none' stroke='#ced0d6' stroke-width='2.2' stroke-linecap='round' stroke-linejoin='round' />
<path d='M3228,1904 H3252 M3235,1904 V1900.5 A3,3 0 0 1 3238,1897.5 H3242 A3,3 0 0 1 3245,1900.5 V1904 M3231,1904 V1925 A3,3 0 0 0 3234,1928 H3246 A3,3 0 0 0 3249,1925 V1904 M3237,1911 V1921 M3243,1911 V1921' fill='none' stroke='#ced0d6' stroke-width='2.2' stroke-linecap='round' stroke-linejoin='round' />
<path d='M31,2061.5 H40.5 A2.5,2.5 0 0 1 43,2064 V2073.5 A2.5,2.5 0 0 1 40.5,2076 H31 A2.5,2.5 0 0 1 28.5,2073.5 V2064 A2.5,2.5 0 0 1 31,2061.5 Z' fill='#25324d' stroke='#548af7' stroke-width='2.3' stroke-linecap='round' stroke-linejoin='round' />
<path d='M435,2061.5 H444.5 A2.5,2.5 0 0 1 447,2064 V2073.5 A2.5,2.5 0 0 1 444.5,2076 H435 A2.5,2.5 0 0 1 432.5,2073.5 V2064 A2.5,2.5 0 0 1 435,2061.5 Z' fill='#25324d' stroke='#548af7' stroke-width='2.3' stroke-linecap='round' stroke-linejoin='round' />
<path d='M641.6,2061.5 H651.1 A2.5,2.5 0 0 1 653.6,2064 V2073.5 A2.5,2.5 0 0 1 651.1,2076 H641.6 A2.5,2.5 0 0 1 639.1,2073.5 V2064 A2.5,2.5 0 0 1 641.6,2061.5 Z' fill='#25324d' stroke='#548af7' stroke-width='2.3' stroke-linecap='round' stroke-linejoin='round' />
<path d='M403,2063 L409,2069 L403,2075' fill='none' stroke='#a9acb2' stroke-width='2.2' stroke-linecap='round' stroke-linejoin='round' />
<path d='M524,2063 L530,2069 L524,2075' fill='none' stroke='#a9acb2' stroke-width='2.2' stroke-linecap='round' stroke-linejoin='round' />
<path d='M610,2063 L616,2069 L610,2075' fill='none' stroke='#a9acb2' stroke-width='2.2' stroke-linecap='round' stroke-linejoin='round' />
<path d='M742,2063 L748,2069 L742,2075' fill='none' stroke='#a9acb2' stroke-width='2.2' stroke-linecap='round' stroke-linejoin='round' />
<path d='M840,2063 L846,2069 L840,2075' fill='none' stroke='#a9acb2' stroke-width='2.2' stroke-linecap='round' stroke-linejoin='round' />
<path d='M942,2063 L948,2069 L942,2075' fill='none' stroke='#a9acb2' stroke-width='2.2' stroke-linecap='round' stroke-linejoin='round' />
<path d='M1092,2063 L1098,2069 L1092,2075' fill='none' stroke='#a9acb2' stroke-width='2.2' stroke-linecap='round' stroke-linejoin='round' />
<path d='M1482,2063 L1488,2069 L1482,2075' fill='none' stroke='#a9acb2' stroke-width='2.2' stroke-linecap='round' stroke-linejoin='round' />
<path d='M1750,2063 L1756,2069 L1750,2075' fill='none' stroke='#a9acb2' stroke-width='2.2' stroke-linecap='round' stroke-linejoin='round' />
<path d='M1994,2063 L2000,2069 L1994,2075' fill='none' stroke='#a9acb2' stroke-width='2.2' stroke-linecap='round' stroke-linejoin='round' />
<path d='M1511,2058 H1533 L1522,2068.5 L1533,2079 H1511 Z' fill='#2d2538' stroke='#a97ef0' stroke-width='2.3' stroke-linecap='round' stroke-linejoin='round' />
<path d='M1803,2059 A12.5,12.5 0 1 0 1806,2074' fill='#25324d' stroke='#548af7' stroke-width='2.4'/>
<path d='M1798,2063 A6,6 0 1 0 1798,2072' fill='none' stroke='#548af7' stroke-width='2.4' stroke-linecap='round' stroke-linejoin='round' />
<rect x='1795' y='2068' width='17' height='17' fill='#2b2d30'/>
<path d='M1797,2070 H1810 L1804,2076 L1810,2082 H1797 Z' fill='#2d2538' stroke='#a97ef0' stroke-width='2.2' stroke-linecap='round' stroke-linejoin='round' />
<circle cx='2034' cy='2067.5' r='13' fill='#3f2a2a' stroke='#d9635a' stroke-width='2.4'/>
<text x='2034' y='2075' text-anchor='middle' font-family='Liberation Sans' font-size='20' fill='#d9635a'>m</text>
<path d='M3092,2055 C3093,2065 3098,2071 3108,2072 C3098,2073 3093,2079 3092,2089 C3091,2079 3086,2073 3076,2072 C3086,2071 3091,2065 3092,2055 Z' fill='#ced0d6' stroke='none' />
<circle cx='3102' cy='2061' r='9' fill='#2b2d30'/>
<circle cx='3102' cy='2061' r='6.5' fill='none' stroke='#ced0d6' stroke-width='2'/>
<path d='M3098,2065 L3106,2057' fill='none' stroke='#ced0d6' stroke-width='2' stroke-linecap='round' stroke-linejoin='round' />
<path d='M3300,2062 H3320 A2,2 0 0 1 3322,2064 V2080 A2,2 0 0 1 3320,2082 H3300 A2,2 0 0 1 3298,2080 V2064 A2,2 0 0 1 3300,2062 Z' fill='none' stroke='#ced0d6' stroke-width='2.3' stroke-linecap='round' stroke-linejoin='round' />
<path d='M3312,2062 V2058 A6,6 0 0 1 3324,2058 V2061 M3306,2069 V2074' fill='none' stroke='#ced0d6' stroke-width='2.3' stroke-linecap='round' stroke-linejoin='round' />
<polyline points='186,270 191.5,274 197.0,270 202.5,274 208.0,270 213.5,274 219.0,270 224.5,274 230.0,270' fill='none' stroke='#c0504d' stroke-width='1.8'/></svg></body></html>
